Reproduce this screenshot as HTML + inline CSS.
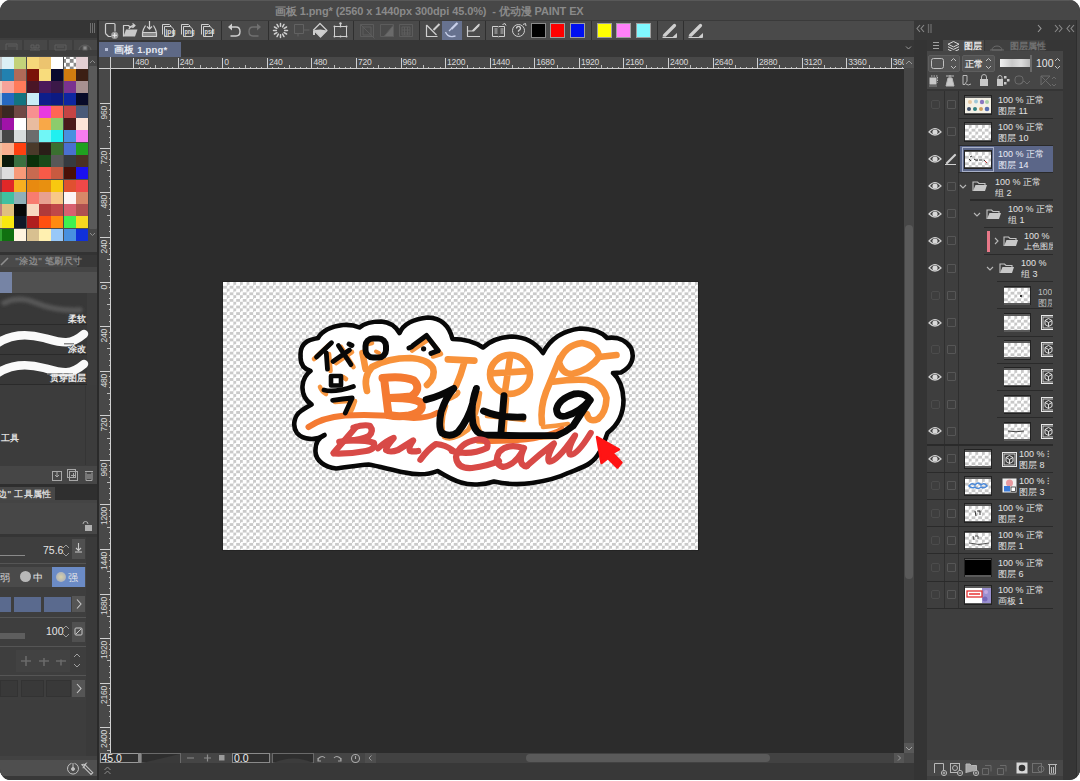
<!DOCTYPE html>
<html><head><meta charset="utf-8">
<style>
*{margin:0;padding:0;box-sizing:border-box}
html,body{width:1080px;height:781px;background:#fff;overflow:hidden;font-family:"Liberation Sans",sans-serif}
.a{position:absolute}
#win{position:absolute;left:0;top:0;width:1080px;height:780px;border-radius:11px;overflow:hidden;background:#3a3a3a}
#title{left:0;top:0;width:1080px;height:20px;background:#474747;border-top:1px solid #585858}
#title span{position:absolute;left:275px;top:3px;font-size:11px;font-weight:bold;color:#8a8a8a;white-space:nowrap;letter-spacing:-0.1px}
.rl{font-size:8.5px;color:#d8d8d8;line-height:9px;white-space:nowrap;letter-spacing:-0.2px}
.rv{font-size:8.5px;color:#d8d8d8;line-height:9px;white-space:nowrap;letter-spacing:-0.2px;transform-origin:0 0;transform:rotate(-90deg) translate(-100%,0)}
svg{position:absolute;overflow:visible}
.ic{stroke:#c9c9c9;fill:none;stroke-width:1.3}
.t{position:absolute;white-space:nowrap;color:#dedede;font-size:10px;line-height:11px}
</style></head>
<body>
<div id="win">
  <div id="title" class="a"><span>画板 1.png* (2560 x 1440px 300dpi 45.0%)&nbsp; - 优动漫 PAINT EX</span></div>
  <!-- left panel -->
  <div class="a" style="left:0;top:20px;width:98px;height:760px;background:#3c3c3c"></div>
  
  <!-- left header -->
<div class="a" style="left:0;top:20px;width:97px;height:18px;background:#353535"></div>
<div class="a" style="left:90px;top:23px;width:1px;height:10px;background:#6e6e6e"></div>
<div class="a" style="left:92px;top:23px;width:1px;height:10px;background:#6e6e6e"></div>
<div class="a" style="left:94px;top:23px;width:1px;height:10px;background:#6e6e6e"></div>
<div class="a" style="left:0;top:38px;width:97px;height:18px;background:#3e3e3e"></div>
<div class="a" style="left:0;top:40px;width:22px;height:10px;background:#474747"></div>
<div class="a" style="left:24px;top:40px;width:23px;height:10px;background:#474747"></div>
<div class="a" style="left:49px;top:40px;width:23px;height:10px;background:#474747"></div>
<div class="a" style="left:74px;top:40px;width:23px;height:10px;background:#474747"></div>
<svg style="left:0;top:38px" width="97" height="14" stroke="#5e5e5e" fill="none" stroke-width="1">
 <path d="M6 12V6h11v6M8 8h8" /><path d="M31 7h3v3h-3zM36 7h3v3h-3zM35 9v3M30 12h10" /><path d="M55 7h11v5H55zM57 9h7"/><path d="M79 12a6 5 0 0 1 12 0"/><rect x="83" y="8" width="4" height="4" fill="#8a8a8a"/>
</svg>
<!-- palette bg -->
<div class="a" style="left:0;top:56px;width:88px;height:185px;background:#4c4c4c"></div>
<div class="a" style="left:-10.3px;top:56.5px;width:12.0px;height:12.0px;background:#c8c8c8"></div>
<div class="a" style="left:2.0px;top:56.5px;width:12.0px;height:12.0px;background:#dcf0f5"></div>
<div class="a" style="left:14.3px;top:56.5px;width:12.0px;height:12.0px;background:#c3d27a"></div>
<div class="a" style="left:26.6px;top:56.5px;width:12.0px;height:12.0px;background:#f6d77a"></div>
<div class="a" style="left:38.9px;top:56.5px;width:12.0px;height:12.0px;background:#ecc46f"></div>
<div class="a" style="left:51.2px;top:56.5px;width:12.0px;height:12.0px;background:#ffffff"></div>
<div class="a" style="left:63.5px;top:56.5px;width:12.0px;height:12.0px;background:conic-gradient(#8a8a8a 25%,#fff 0 50%,#8a8a8a 0 75%,#fff 0);background-size:7.6px 7.6px;background-position:-1.8px -1.8px"></div>
<div class="a" style="left:75.8px;top:56.5px;width:12.0px;height:12.0px;background:#e3cfd3"></div>
<div class="a" style="left:-10.3px;top:68.8px;width:12.0px;height:12.0px;background:#3a6a8a"></div>
<div class="a" style="left:2.0px;top:68.8px;width:12.0px;height:12.0px;background:#2281b0"></div>
<div class="a" style="left:14.3px;top:68.8px;width:12.0px;height:12.0px;background:#b06a58"></div>
<div class="a" style="left:26.6px;top:68.8px;width:12.0px;height:12.0px;background:#7a1209"></div>
<div class="a" style="left:38.9px;top:68.8px;width:12.0px;height:12.0px;background:#f8dc7c"></div>
<div class="a" style="left:51.2px;top:68.8px;width:12.0px;height:12.0px;background:#0a0a2e"></div>
<div class="a" style="left:63.5px;top:68.8px;width:12.0px;height:12.0px;background:#d07c10"></div>
<div class="a" style="left:75.8px;top:68.8px;width:12.0px;height:12.0px;background:#3c1f14"></div>
<div class="a" style="left:-10.3px;top:81.1px;width:12.0px;height:12.0px;background:#f0d0c0"></div>
<div class="a" style="left:2.0px;top:81.1px;width:12.0px;height:12.0px;background:#f7a39a"></div>
<div class="a" style="left:14.3px;top:81.1px;width:12.0px;height:12.0px;background:#ff7b5a"></div>
<div class="a" style="left:26.6px;top:81.1px;width:12.0px;height:12.0px;background:#4a1626"></div>
<div class="a" style="left:38.9px;top:81.1px;width:12.0px;height:12.0px;background:#4a1a5a"></div>
<div class="a" style="left:51.2px;top:81.1px;width:12.0px;height:12.0px;background:#3b1848"></div>
<div class="a" style="left:63.5px;top:81.1px;width:12.0px;height:12.0px;background:#7a3290"></div>
<div class="a" style="left:75.8px;top:81.1px;width:12.0px;height:12.0px;background:#a89090"></div>
<div class="a" style="left:-10.3px;top:93.4px;width:12.0px;height:12.0px;background:#a0c0e0"></div>
<div class="a" style="left:2.0px;top:93.4px;width:12.0px;height:12.0px;background:#2668c0"></div>
<div class="a" style="left:14.3px;top:93.4px;width:12.0px;height:12.0px;background:#137480"></div>
<div class="a" style="left:26.6px;top:93.4px;width:12.0px;height:12.0px;background:#c8ecf6"></div>
<div class="a" style="left:38.9px;top:93.4px;width:12.0px;height:12.0px;background:#0d1e8a"></div>
<div class="a" style="left:51.2px;top:93.4px;width:12.0px;height:12.0px;background:#0c1a82"></div>
<div class="a" style="left:63.5px;top:93.4px;width:12.0px;height:12.0px;background:#0e26a0"></div>
<div class="a" style="left:75.8px;top:93.4px;width:12.0px;height:12.0px;background:#080a28"></div>
<div class="a" style="left:-10.3px;top:105.7px;width:12.0px;height:12.0px;background:#5a3020"></div>
<div class="a" style="left:2.0px;top:105.7px;width:12.0px;height:12.0px;background:#3a2822"></div>
<div class="a" style="left:14.3px;top:105.7px;width:12.0px;height:12.0px;background:#704844"></div>
<div class="a" style="left:26.6px;top:105.7px;width:12.0px;height:12.0px;background:#f79090"></div>
<div class="a" style="left:38.9px;top:105.7px;width:12.0px;height:12.0px;background:#e83ae0"></div>
<div class="a" style="left:51.2px;top:105.7px;width:12.0px;height:12.0px;background:#ff6654"></div>
<div class="a" style="left:63.5px;top:105.7px;width:12.0px;height:12.0px;background:#c44444"></div>
<div class="a" style="left:75.8px;top:105.7px;width:12.0px;height:12.0px;background:#4a5a78"></div>
<div class="a" style="left:-10.3px;top:118.0px;width:12.0px;height:12.0px;background:#602070"></div>
<div class="a" style="left:2.0px;top:118.0px;width:12.0px;height:12.0px;background:#a012a8"></div>
<div class="a" style="left:14.3px;top:118.0px;width:12.0px;height:12.0px;background:#ffffff"></div>
<div class="a" style="left:26.6px;top:118.0px;width:12.0px;height:12.0px;background:#e8bca0"></div>
<div class="a" style="left:38.9px;top:118.0px;width:12.0px;height:12.0px;background:#f8a848"></div>
<div class="a" style="left:51.2px;top:118.0px;width:12.0px;height:12.0px;background:#8ccc6c"></div>
<div class="a" style="left:63.5px;top:118.0px;width:12.0px;height:12.0px;background:#4a1a1a"></div>
<div class="a" style="left:75.8px;top:118.0px;width:12.0px;height:12.0px;background:#fce4d8"></div>
<div class="a" style="left:-10.3px;top:130.3px;width:12.0px;height:12.0px;background:#b0b0b0"></div>
<div class="a" style="left:2.0px;top:130.3px;width:12.0px;height:12.0px;background:#454545"></div>
<div class="a" style="left:14.3px;top:130.3px;width:12.0px;height:12.0px;background:#d8dcdc"></div>
<div class="a" style="left:26.6px;top:130.3px;width:12.0px;height:12.0px;background:#6c6c6c"></div>
<div class="a" style="left:38.9px;top:130.3px;width:12.0px;height:12.0px;background:#70f6f6"></div>
<div class="a" style="left:51.2px;top:130.3px;width:12.0px;height:12.0px;background:#20f0f0"></div>
<div class="a" style="left:63.5px;top:130.3px;width:12.0px;height:12.0px;background:#4890e0"></div>
<div class="a" style="left:75.8px;top:130.3px;width:12.0px;height:12.0px;background:#f87cf0"></div>
<div class="a" style="left:-10.3px;top:142.6px;width:12.0px;height:12.0px;background:#f0c0a0"></div>
<div class="a" style="left:2.0px;top:142.6px;width:12.0px;height:12.0px;background:#f8b090"></div>
<div class="a" style="left:14.3px;top:142.6px;width:12.0px;height:12.0px;background:#ff4010"></div>
<div class="a" style="left:26.6px;top:142.6px;width:12.0px;height:12.0px;background:#4a3a2a"></div>
<div class="a" style="left:38.9px;top:142.6px;width:12.0px;height:12.0px;background:#2a1e18"></div>
<div class="a" style="left:51.2px;top:142.6px;width:12.0px;height:12.0px;background:#3a7030"></div>
<div class="a" style="left:63.5px;top:142.6px;width:12.0px;height:12.0px;background:#4a70d0"></div>
<div class="a" style="left:75.8px;top:142.6px;width:12.0px;height:12.0px;background:#20a020"></div>
<div class="a" style="left:-10.3px;top:154.9px;width:12.0px;height:12.0px;background:#f0c890"></div>
<div class="a" style="left:2.0px;top:154.9px;width:12.0px;height:12.0px;background:#0a1a0a"></div>
<div class="a" style="left:14.3px;top:154.9px;width:12.0px;height:12.0px;background:#3a7040"></div>
<div class="a" style="left:26.6px;top:154.9px;width:12.0px;height:12.0px;background:#0a300a"></div>
<div class="a" style="left:38.9px;top:154.9px;width:12.0px;height:12.0px;background:#1a4a1a"></div>
<div class="a" style="left:51.2px;top:154.9px;width:12.0px;height:12.0px;background:#585858"></div>
<div class="a" style="left:63.5px;top:154.9px;width:12.0px;height:12.0px;background:#363a40"></div>
<div class="a" style="left:75.8px;top:154.9px;width:12.0px;height:12.0px;background:#4a3024"></div>
<div class="a" style="left:-10.3px;top:167.2px;width:12.0px;height:12.0px;background:#b0b0b0"></div>
<div class="a" style="left:2.0px;top:167.2px;width:12.0px;height:12.0px;background:#dcdcdc"></div>
<div class="a" style="left:14.3px;top:167.2px;width:12.0px;height:12.0px;background:#f89a78"></div>
<div class="a" style="left:26.6px;top:167.2px;width:12.0px;height:12.0px;background:#c86a50"></div>
<div class="a" style="left:38.9px;top:167.2px;width:12.0px;height:12.0px;background:#f85a48"></div>
<div class="a" style="left:51.2px;top:167.2px;width:12.0px;height:12.0px;background:#c85a40"></div>
<div class="a" style="left:63.5px;top:167.2px;width:12.0px;height:12.0px;background:#4a1008"></div>
<div class="a" style="left:75.8px;top:167.2px;width:12.0px;height:12.0px;background:#1a10f0"></div>
<div class="a" style="left:-10.3px;top:179.5px;width:12.0px;height:12.0px;background:#803040"></div>
<div class="a" style="left:2.0px;top:179.5px;width:12.0px;height:12.0px;background:#e02828"></div>
<div class="a" style="left:14.3px;top:179.5px;width:12.0px;height:12.0px;background:#f8b020"></div>
<div class="a" style="left:26.6px;top:179.5px;width:12.0px;height:12.0px;background:#e88a10"></div>
<div class="a" style="left:38.9px;top:179.5px;width:12.0px;height:12.0px;background:#e89010"></div>
<div class="a" style="left:51.2px;top:179.5px;width:12.0px;height:12.0px;background:#f8c810"></div>
<div class="a" style="left:63.5px;top:179.5px;width:12.0px;height:12.0px;background:#e05030"></div>
<div class="a" style="left:75.8px;top:179.5px;width:12.0px;height:12.0px;background:#f04848"></div>
<div class="a" style="left:-10.3px;top:191.8px;width:12.0px;height:12.0px;background:#50a080"></div>
<div class="a" style="left:2.0px;top:191.8px;width:12.0px;height:12.0px;background:#40c0a0"></div>
<div class="a" style="left:14.3px;top:191.8px;width:12.0px;height:12.0px;background:#90b0b8"></div>
<div class="a" style="left:26.6px;top:191.8px;width:12.0px;height:12.0px;background:#f87c70"></div>
<div class="a" style="left:38.9px;top:191.8px;width:12.0px;height:12.0px;background:#e8a090"></div>
<div class="a" style="left:51.2px;top:191.8px;width:12.0px;height:12.0px;background:#f8c888"></div>
<div class="a" style="left:63.5px;top:191.8px;width:12.0px;height:12.0px;background:#fcf4f4"></div>
<div class="a" style="left:75.8px;top:191.8px;width:12.0px;height:12.0px;background:#d88868"></div>
<div class="a" style="left:-10.3px;top:204.1px;width:12.0px;height:12.0px;background:#c08080"></div>
<div class="a" style="left:2.0px;top:204.1px;width:12.0px;height:12.0px;background:#e0c080"></div>
<div class="a" style="left:14.3px;top:204.1px;width:12.0px;height:12.0px;background:#080808"></div>
<div class="a" style="left:26.6px;top:204.1px;width:12.0px;height:12.0px;background:#f8d8c0"></div>
<div class="a" style="left:38.9px;top:204.1px;width:12.0px;height:12.0px;background:#b03a3a"></div>
<div class="a" style="left:51.2px;top:204.1px;width:12.0px;height:12.0px;background:#c04848"></div>
<div class="a" style="left:63.5px;top:204.1px;width:12.0px;height:12.0px;background:#d86070"></div>
<div class="a" style="left:75.8px;top:204.1px;width:12.0px;height:12.0px;background:#b05050"></div>
<div class="a" style="left:-10.3px;top:216.4px;width:12.0px;height:12.0px;background:#f0e060"></div>
<div class="a" style="left:2.0px;top:216.4px;width:12.0px;height:12.0px;background:#f8e810"></div>
<div class="a" style="left:14.3px;top:216.4px;width:12.0px;height:12.0px;background:#101828"></div>
<div class="a" style="left:26.6px;top:216.4px;width:12.0px;height:12.0px;background:#b01e1e"></div>
<div class="a" style="left:38.9px;top:216.4px;width:12.0px;height:12.0px;background:#ff5010"></div>
<div class="a" style="left:51.2px;top:216.4px;width:12.0px;height:12.0px;background:#ff8a10"></div>
<div class="a" style="left:63.5px;top:216.4px;width:12.0px;height:12.0px;background:#40f050"></div>
<div class="a" style="left:75.8px;top:216.4px;width:12.0px;height:12.0px;background:#f8d820"></div>
<div class="a" style="left:-10.3px;top:228.7px;width:12.0px;height:12.0px;background:#30a030"></div>
<div class="a" style="left:2.0px;top:228.7px;width:12.0px;height:12.0px;background:#107010"></div>
<div class="a" style="left:14.3px;top:228.7px;width:12.0px;height:12.0px;background:#fff4e0"></div>
<div class="a" style="left:26.6px;top:228.7px;width:12.0px;height:12.0px;background:#d8c090"></div>
<div class="a" style="left:38.9px;top:228.7px;width:12.0px;height:12.0px;background:#fff0b0"></div>
<div class="a" style="left:51.2px;top:228.7px;width:12.0px;height:12.0px;background:#98c8f8"></div>
<div class="a" style="left:63.5px;top:228.7px;width:12.0px;height:12.0px;background:#4890e0"></div>
<div class="a" style="left:75.8px;top:228.7px;width:12.0px;height:12.0px;background:#1030d8"></div>
<!-- palette scrollbar -->
<div class="a" style="left:88px;top:56px;width:9px;height:185px;background:#474747"></div>
<div class="a" style="left:88.5px;top:66px;width:8px;height:163px;background:#5a5a5a;border-radius:1px"></div>
<svg style="left:88px;top:56px" width="9" height="185" fill="none" stroke="#8c8c8c" stroke-width="1"><path d="M2 7l2.5-2.5L7 7"/><path d="M2 177l2.5 2.5L7 177"/></svg>
<div class="a" style="left:0;top:241px;width:97px;height:11px;background:#474747"></div>
<div class="a" style="left:0;top:252px;width:97px;height:3px;background:#333"></div>
<!-- brush size tab -->
<div class="a" style="left:0;top:255px;width:97px;height:12px;background:#383838"></div>
<div class="a" style="left:0;top:255px;width:77px;height:12px;background:#4a4a4a"></div>
<svg style="left:0;top:255px" width="12" height="12" fill="none" stroke="#8e8e8e" stroke-width="1.6"><path d="M1 10L8 3"/></svg>
<div class="t" style="left:15px;top:256px;font-size:8.5px;color:#8a8a8a;font-weight:bold;letter-spacing:0.3px">"涂边" 笔刷尺寸</div>
<div class="a" style="left:0;top:267px;width:97px;height:5px;background:#444"></div>
<div class="a" style="left:0;top:272px;width:97px;height:21px;background:#505050"></div>
<div class="a" style="left:0;top:272px;width:12px;height:21px;background:#7684a5"></div>
<!-- brush list -->
<div class="a" style="left:0;top:293px;width:87px;height:92px;background:#383838"></div>
<div class="a" style="left:87px;top:293px;width:10px;height:92px;background:#3d3d3d"></div>
<div class="a" style="left:0;top:324px;width:87px;height:1px;background:#2a2a2a"></div>
<div class="a" style="left:0;top:354px;width:87px;height:1px;background:#2a2a2a"></div>
<div class="a" style="left:0;top:384px;width:87px;height:1px;background:#2a2a2a"></div>
<svg style="left:0;top:293px" width="87" height="92">
 <defs><filter id="bl" x="-20%" y="-50%" width="140%" height="200%"><feGaussianBlur stdDeviation="1.6"/></filter></defs><path d="M4 10 C 14 5, 24 5, 36 10 S 60 18, 80 17" stroke="#565656" stroke-width="5.5" fill="none" stroke-linecap="round" filter="url(#bl)"/>
 <path d="M-2 50 C 10 42, 26 40, 44 45 S 70 53, 84 41" stroke="#fafafa" stroke-width="8.5" fill="none" stroke-linecap="round"/>
 <path d="M-2 80 C 10 72, 26 70, 44 75 S 70 83, 84 71" stroke="#fafafa" stroke-width="8.5" fill="none" stroke-linecap="round"/>
 <rect x="64" y="50" width="10" height="1.5" fill="#8a8a8a"/>
 <rect x="47" y="80" width="26" height="1.5" fill="#8a8a8a"/>
</svg>
<div class="t" style="left:68px;top:313.5px;font-size:8.5px;color:#e8e8e8;font-weight:bold">柔软</div>
<div class="t" style="left:68px;top:343.5px;font-size:8.5px;color:#e8e8e8;font-weight:bold">涂改</div>
<div class="t" style="left:50px;top:372.5px;font-size:8.5px;color:#e8e8e8;font-weight:bold">贯穿图层</div>
<!-- sub tool region -->
<div class="a" style="left:0;top:385px;width:97px;height:81px;background:#3c3c3c"></div>
<div class="a" style="left:85px;top:386px;width:1px;height:79px;background:#353535"></div>
<div class="t" style="left:0.5px;top:432.5px;font-size:8.5px;color:#e0e0e0;font-weight:bold">工具</div>
<div class="a" style="left:0;top:466px;width:97px;height:18px;background:#464646"></div>
<svg style="left:0;top:466px" width="97" height="18" fill="none" stroke="#a8a8a8" stroke-width="1">
 <rect x="52.5" y="5.5" width="9" height="9"/><path d="M57 6v5M55 9l2 2 2-2"/>
 <rect x="69.5" y="5.5" width="8" height="9"/><rect x="67.5" y="3.5" width="8" height="8"/><path d="M73.5 7v5M71 9.5h5"/>
 <path d="M85 5.5h8M86 6.5v8h6v-8M88 8v5M90 8v5"/>
</svg>
<div class="a" style="left:0;top:484px;width:97px;height:3px;background:#2e2e2e"></div>
<!-- tool property tab -->
<div class="a" style="left:0;top:487px;width:97px;height:13px;background:#2f2f2f"></div>
<div class="a" style="left:0;top:487px;width:55px;height:13px;background:#474747"></div>
<div class="t" style="left:-2px;top:488.5px;font-size:8.5px;color:#d8d8d8;font-weight:bold;letter-spacing:0.3px">边" 工具属性</div>
<div class="a" style="left:0;top:500px;width:97px;height:3px;background:#444"></div>
<div class="a" style="left:0;top:503px;width:97px;height:31px;background:#474747"></div>
<svg style="left:80px;top:519px" width="14" height="14" fill="none" stroke="#b0b0b0" stroke-width="1"><path d="M3 5a2.5 2.5 0 0 1 5 0"/><rect x="5" y="6" width="7" height="6" fill="#b0b0b0" stroke="none"/></svg>
<div class="a" style="left:0;top:534px;width:97px;height:3px;background:#353535"></div>
<!-- property rows -->
<div class="a" style="left:0;top:537px;width:86px;height:242px;background:#3e3e3e"></div>
<div class="a" style="left:86px;top:537px;width:11px;height:242px;background:#3a3a3a"></div>
<div class="a" style="left:0;top:555px;width:25px;height:1px;background:#8a8a8a"></div>
<div class="t" style="left:43px;top:545px;font-size:10.5px;color:#e4e4e4">75.6</div>
<svg style="left:62px;top:543px" width="8" height="16" fill="none" stroke="#9a9a9a" stroke-width="1"><path d="M1 5l3-3 3 3M1 10l3 3 3-3"/></svg>
<div class="a" style="left:72px;top:539px;width:13px;height:20px;background:#505050"></div>
<svg style="left:72px;top:539px" width="13" height="20" fill="none" stroke="#c8c8c8" stroke-width="1.1"><path d="M6.5 4v7M4 9l2.5 2.5L9 9M3 13h7"/></svg>
<div class="a" style="left:0;top:563px;width:86px;height:1px;background:#555"></div>
<!-- segmented -->
<div class="a" style="left:0;top:567px;width:86px;height:20px;background:#4a4a4a"></div>
<div class="a" style="left:52px;top:567px;width:33px;height:20px;background:#6b8bc6"></div>
<div class="t" style="left:0;top:572px;font-size:9.5px;color:#d8d8d8">弱</div>
<div class="a" style="left:20px;top:571px;width:11px;height:11px;border-radius:50%;background:#b8b8b8"></div>
<div class="t" style="left:33px;top:572px;font-size:9.5px;color:#e8e8e8">中</div>
<div class="a" style="left:56px;top:572px;width:10px;height:10px;border-radius:50%;background:radial-gradient(#d8d0a8,#a0a8c0)"></div>
<div class="t" style="left:68px;top:572px;font-size:9.5px;color:#e8e8e8">强</div>
<!-- blue boxes -->
<div class="a" style="left:0;top:597px;width:11px;height:15px;background:#5a6a8e"></div>
<div class="a" style="left:14px;top:597px;width:27px;height:15px;background:#5a6a8e"></div>
<div class="a" style="left:44px;top:597px;width:27px;height:15px;background:#5a6a8e"></div>
<div class="a" style="left:72px;top:596px;width:13px;height:16px;background:#555"></div>
<svg style="left:72px;top:596px" width="13" height="16" fill="none" stroke="#c8c8c8" stroke-width="1.1"><path d="M5 3.5l4 4.5-4 4.5"/></svg>
<div class="a" style="left:0;top:617px;width:86px;height:1px;background:#555"></div>
<div class="a" style="left:0;top:633px;width:25px;height:6px;background:#5e5e5e"></div>
<div class="t" style="left:46px;top:626px;font-size:10.5px;color:#e4e4e4">100</div>
<svg style="left:62px;top:624px" width="8" height="16" fill="none" stroke="#9a9a9a" stroke-width="1"><path d="M1 5l3-3 3 3M1 10l3 3 3-3"/></svg>
<div class="a" style="left:72px;top:622px;width:13px;height:20px;background:#505050"></div>
<svg style="left:72px;top:622px" width="13" height="20" fill="none" stroke="#c8c8c8" stroke-width="1"><rect x="3" y="6" width="7" height="7" rx="1"/><path d="M4 12l5-5"/></svg>
<div class="a" style="left:0;top:646px;width:86px;height:1px;background:#555"></div>
<div class="a" style="left:16px;top:650px;width:54px;height:22px;background:#424242"></div>
<svg style="left:18px;top:650px" width="68" height="22" fill="none" stroke="#6a6a6a" stroke-width="1.6"><path d="M3 11h10M8 6v10M21 11h10M26 8v8M38 11h10M43 9.5v6"/><path d="M56 7l3-3 3 3M56 14l3 3 3-3" stroke="#a0a0a0" stroke-width="1"/></svg>
<div class="a" style="left:0;top:675px;width:86px;height:1px;background:#555"></div>
<div class="a" style="left:0;top:680px;width:18px;height:17px;background:#393939;border:1px solid #333"></div>
<div class="a" style="left:21px;top:680px;width:23px;height:17px;background:#393939;border:1px solid #333"></div>
<div class="a" style="left:46px;top:680px;width:25px;height:17px;background:#393939;border:1px solid #333"></div>
<div class="a" style="left:72px;top:680px;width:13px;height:17px;background:#555"></div>
<svg style="left:72px;top:680px" width="13" height="17" fill="none" stroke="#c8c8c8" stroke-width="1.1"><path d="M5 4l4 4.5-4 4.5"/></svg>
<div class="a" style="left:0;top:700px;width:86px;height:56px;background:#3d3d3d"></div>
<!-- bottom bar -->
<div class="a" style="left:0;top:756px;width:97px;height:4px;background:#424242"></div>
<div class="a" style="left:0;top:760px;width:97px;height:16px;background:#4f4f4f"></div>
<div class="a" style="left:0;top:776px;width:97px;height:4px;background:#383838"></div>
<svg style="left:64px;top:760px" width="34" height="16" fill="none" stroke="#c0c0c0" stroke-width="1"><path d="M10.5 3.3A5.5 5.5 0 1 1 7.5 3.3"/><path d="M9 3v6"/><circle cx="9" cy="9" r="1.5" fill="#c0c0c0"/><path d="M22 3.5a3.2 3.2 0 0 0 -1.5 4.5l6.5 6.5 1.8-1.8-6.5-6.5a3.2 3.2 0 0 0 -4.5 -1.5l2 2-1 1.5z" stroke-width="1.1"/></svg>

  <!-- separator -->
  <div class="a" style="left:97px;top:20px;width:2px;height:760px;background:#2a2a2a"></div>
  <!-- toolbar -->
  <div class="a" style="left:99px;top:20px;width:815px;height:20px;background:#4a4a4a"></div>
  <div class="a" style="left:99px;top:20px;width:815px;height:1px;background:#3a3a3a"></div>
<div class="a" style="left:442px;top:21px;width:20px;height:19px;background:#67728f"></div>
<div class="a" style="left:531px;top:23px;width:15px;height:15px;background:#000;border:1px solid #8a8a8a"></div>
<div class="a" style="left:550px;top:23px;width:15px;height:15px;background:#f00;border:1px solid #a0a0a0"></div>
<div class="a" style="left:570px;top:23px;width:15px;height:15px;background:#0010f0;border:1px solid #a0a0a0"></div>
<div class="a" style="left:597px;top:23px;width:15px;height:15px;background:#ff0;border:1px solid #a0a0a0"></div>
<div class="a" style="left:616px;top:23px;width:15px;height:15px;background:#ff80f8;border:1px solid #a0a0a0"></div>
<div class="a" style="left:636px;top:23px;width:15px;height:15px;background:#80f8ff;border:1px solid #a0a0a0"></div>
<svg style="left:0;top:0" width="1080" height="42" fill="none" stroke="#cfcfcf" stroke-width="1.2" stroke-linejoin="round">
 <g stroke="#2f2f2f" stroke-width="1"><path d="M221.5 21v19M268.5 21v19M353.5 21v19M419.5 21v19M485.5 21v19M591.5 21v19M657.5 21v19M683.5 21v19"/></g>
 <!-- new -->
 <path d="M105.5 33.5V24.5q0-1 1-1h7.5q1 0 1 1v7M105.5 33.5l3 3h3"/>
 <circle cx="114.7" cy="35.3" r="3.6" fill="#9a9a9a" stroke="none"/><path d="M114.7 33v4.6M112.4 35.3h4.6" stroke="#eee" stroke-width="1"/>
 <!-- open -->
 <path d="M123.5 36.5V25.5h5l1.5 1.5h3"/><path d="M123.5 36.5l2.5-7h11.5l-2.5 7z" fill="#c8c8c8" stroke="none"/><path d="M129 29q1-3 5-3.5M132.5 23.5l2.5 2-2.5 2.2" stroke-width="1.3"/>
 <!-- import -->
 <path d="M149.5 21v8M147 26.5l2.5 2.5 2.5-2.5"/><path d="M145.5 25.5q-2 3-3 7M153.5 25.5q2 3 3 7"/><rect x="142.5" y="32.5" width="14" height="4" stroke="#cfcfcf" fill="#8c8c8c"/>
 <!-- jpg png psd -->
 <g stroke-width="1"><path d="M162.5 34.5V24.5h7l2 2"/><path d="M164.5 36.5V26.5h6.5l2.5 2.5v7.5z"/>
 <path d="M181.5 34.5V24.5h7l2 2"/><path d="M183.5 36.5V26.5h6.5l2.5 2.5v7.5z"/>
 <path d="M201.5 34.5V24.5h7l2 2"/><path d="M203.5 36.5V26.5h6.5l2.5 2.5v7.5z"/></g>
 <text x="165.5" y="33.5" font-size="7" fill="#dcdcdc" stroke="none" font-weight="bold" font-family="Liberation Sans" textLength="10" lengthAdjust="spacingAndGlyphs">jpg</text>
 <text x="184.5" y="33.5" font-size="7" fill="#dcdcdc" stroke="none" font-weight="bold" font-family="Liberation Sans" textLength="10" lengthAdjust="spacingAndGlyphs">png</text>
 <text x="204.5" y="33.5" font-size="7" fill="#dcdcdc" stroke="none" font-weight="bold" font-family="Liberation Sans" textLength="10" lengthAdjust="spacingAndGlyphs">psd</text>
 <!-- undo redo -->
 <path d="M231 27h5q4 0 4 4.5t-4 4.5h-5.5" stroke-width="1.4"/><path d="M228 27l4-3.5v7z" fill="#d0d0d0" stroke="none"/>
 <path d="M258 27h-5q-4 0-4 4.5t4 4.5h5.5" stroke="#707070" stroke-width="1.4"/><path d="M261 27l-4-3.5v7z" fill="#707070" stroke="none"/>
 <!-- spinner -->
 <g stroke="#d0d0d0" stroke-width="1.5" stroke-linecap="round"><path d="M284.70 30.50L287.50 30.50M284.14 32.60L286.56 34.00M282.60 34.14L284.00 36.56M280.50 34.70L280.50 37.50M278.40 34.14L277.00 36.56M276.86 32.60L274.44 34.00M276.30 30.50L273.50 30.50M276.86 28.40L274.44 27.00M278.40 26.86L277.00 24.44M280.50 26.30L280.50 23.50M282.60 26.86L284.00 24.44M284.14 28.40L286.56 27.00"/></g>
 <!-- dim square -->
 <g stroke="#626262" stroke-width="1"><rect x="294.5" y="24.5" width="9" height="9"/><path d="M303.5 30h6M298 33.5v3"/></g>
 <!-- bucket -->
 <path d="M320 23.5l7 7-6.5 6.5-7-7z"/><path d="M313.8 30l6.7-0.5 6.5 1-6.5 6.5z" fill="#cfcfcf" stroke="none"/><rect x="313" y="31" width="2" height="4" fill="#cfcfcf" stroke="none"/>
 <!-- transform -->
 <rect x="334.5" y="26.5" width="12" height="10" stroke-width="1"/><path d="M340.5 23v3.5" stroke-width="1"/>
 <g fill="#cfcfcf" stroke="none"><circle cx="340.5" cy="23.5" r="1.2"/><circle cx="334.5" cy="26.5" r="1"/><circle cx="346.5" cy="26.5" r="1"/><circle cx="334.5" cy="36.5" r="1"/><circle cx="346.5" cy="36.5" r="1"/><circle cx="340.5" cy="36.5" r="1"/><circle cx="340.5" cy="26.5" r="1"/></g>
 <!-- dim icons -->
 <g stroke="#5c5c5c" stroke-width="1"><rect x="360.5" y="24.5" width="13" height="12"/><path d="M360.5 24.5l14 14M363 27h8v8h-8z"/>
 <rect x="380.5" y="24.5" width="13" height="12"/><path d="M393.5 25v11.5H384z" fill="#6a6a6a"/>
 <rect x="399.5" y="24.5" width="13" height="12"/><path d="M402 27h8v8h-8zM404.5 27v8M407.5 27v8M402 30h8M402 33h8"/></g>
 <!-- rulers -->
 <path d="M426.5 25v11.5h11"/><path d="M426.5 25l10 10"/><path d="M433.5 30l6-6" stroke-width="2"/>
 <path d="M445.5 32q2 5 7 4.5l3-0.5M449 31l8-8" stroke="#c8d0ea" stroke-width="1.3"/><path d="M451.5 29l6-6" stroke="#c8d0ea" stroke-width="2"/>
 <path d="M467.5 26v10.5h12.5M467.5 31h5l7-7" /><path d="M473 31l6-6" stroke-width="2"/>
 <!-- book -->
 <path d="M492.5 26.5h5.5l0.5 0.7 0.5-0.7h5.5v10h-5.5l-0.5 0.7-0.5-0.7h-5.5z" stroke-width="1"/><path d="M494.5 29h3M494.5 31h3M494.5 33h3M500.5 29h3M500.5 31h3M500.5 33h3" stroke-width="0.9"/><path d="M502.5 24.5l2.5-1 1 2" stroke-width="1"/>
 <!-- help -->
 <circle cx="518.5" cy="30.5" r="6" stroke-width="1"/><path d="M516.5 28.5q0-2.2 2-2.2t2 2.2q0 1.2-2 2.3v1" stroke-width="1.3"/><circle cx="518.5" cy="34" r="0.8" fill="#cfcfcf" stroke="none"/><path d="M523 24.5l2.5-1 0.5 2.5" stroke-width="1"/>
 <!-- pencils -->
 <g><path d="M665 35l9.5-9.5" stroke-width="3.2" stroke-linecap="round"/><path d="M662.5 37.5h14" stroke-width="1"/><path d="M672 37.5l5-4.5v4.5z" fill="#cfcfcf" stroke="none"/><path d="M663 36.5l1.5-2.5" stroke-width="1.3"/>
 <path d="M691 35l9.5-9.5" stroke-width="3.2" stroke-linecap="round"/><path d="M688.5 37.5h14" stroke-width="1"/><path d="M698 37.5l5-4.5v4.5z" fill="#cfcfcf" stroke="none"/><path d="M689 36.5l1.5-2.5" stroke-width="1.3"/></g>
</svg>

  <!-- tab row -->
  <div class="a" style="left:99px;top:40px;width:815px;height:17px;background:#363636"></div>
  <div class="a" style="left:99px;top:41.5px;width:82px;height:15.5px;background:#5e6986"></div>
  <!-- rulers -->
  <div class="a" style="left:99px;top:57px;width:805px;height:12px;background:#484848"></div>
  <div class="a" style="left:99px;top:57px;width:12px;height:696px;background:#484848"></div>
  <div class="a" style="left:99px;top:68px;width:805px;height:1px;background:#d0d0d0"></div>
  <div class="a" style="left:110px;top:57px;width:1px;height:696px;background:#d0d0d0"></div>
  <!-- canvas -->
  <div class="a" style="left:111px;top:69px;width:793px;height:684px;background:#2c2c2c"></div>
  <div class="a" style="left:133.2px;top:58px;width:1px;height:10px;background:#cfcfcf"></div>
<div class="a rl" style="left:135.2px;top:57.5px">480</div>
<div class="a" style="left:138.7px;top:66.5px;width:1px;height:1.5px;background:#bdbdbd"></div>
<div class="a" style="left:144.3px;top:66.5px;width:1px;height:1.5px;background:#bdbdbd"></div>
<div class="a" style="left:149.9px;top:66.5px;width:1px;height:1.5px;background:#bdbdbd"></div>
<div class="a" style="left:155.4px;top:65px;width:1px;height:3px;background:#bdbdbd"></div>
<div class="a" style="left:161.0px;top:66.5px;width:1px;height:1.5px;background:#bdbdbd"></div>
<div class="a" style="left:166.6px;top:66.5px;width:1px;height:1.5px;background:#bdbdbd"></div>
<div class="a" style="left:172.2px;top:66.5px;width:1px;height:1.5px;background:#bdbdbd"></div>
<div class="a" style="left:177.7px;top:58px;width:1px;height:10px;background:#cfcfcf"></div>
<div class="a rl" style="left:179.7px;top:57.5px">240</div>
<div class="a" style="left:183.3px;top:66.5px;width:1px;height:1.5px;background:#bdbdbd"></div>
<div class="a" style="left:188.9px;top:66.5px;width:1px;height:1.5px;background:#bdbdbd"></div>
<div class="a" style="left:194.4px;top:66.5px;width:1px;height:1.5px;background:#bdbdbd"></div>
<div class="a" style="left:200.0px;top:65px;width:1px;height:3px;background:#bdbdbd"></div>
<div class="a" style="left:205.6px;top:66.5px;width:1px;height:1.5px;background:#bdbdbd"></div>
<div class="a" style="left:211.2px;top:66.5px;width:1px;height:1.5px;background:#bdbdbd"></div>
<div class="a" style="left:216.7px;top:66.5px;width:1px;height:1.5px;background:#bdbdbd"></div>
<div class="a" style="left:222.3px;top:58px;width:1px;height:10px;background:#cfcfcf"></div>
<div class="a rl" style="left:224.3px;top:57.5px">0</div>
<div class="a" style="left:227.9px;top:66.5px;width:1px;height:1.5px;background:#bdbdbd"></div>
<div class="a" style="left:233.4px;top:66.5px;width:1px;height:1.5px;background:#bdbdbd"></div>
<div class="a" style="left:239.0px;top:66.5px;width:1px;height:1.5px;background:#bdbdbd"></div>
<div class="a" style="left:244.6px;top:65px;width:1px;height:3px;background:#bdbdbd"></div>
<div class="a" style="left:250.2px;top:66.5px;width:1px;height:1.5px;background:#bdbdbd"></div>
<div class="a" style="left:255.7px;top:66.5px;width:1px;height:1.5px;background:#bdbdbd"></div>
<div class="a" style="left:261.3px;top:66.5px;width:1px;height:1.5px;background:#bdbdbd"></div>
<div class="a" style="left:266.9px;top:58px;width:1px;height:10px;background:#cfcfcf"></div>
<div class="a rl" style="left:268.9px;top:57.5px">240</div>
<div class="a" style="left:272.4px;top:66.5px;width:1px;height:1.5px;background:#bdbdbd"></div>
<div class="a" style="left:278.0px;top:66.5px;width:1px;height:1.5px;background:#bdbdbd"></div>
<div class="a" style="left:283.6px;top:66.5px;width:1px;height:1.5px;background:#bdbdbd"></div>
<div class="a" style="left:289.2px;top:65px;width:1px;height:3px;background:#bdbdbd"></div>
<div class="a" style="left:294.7px;top:66.5px;width:1px;height:1.5px;background:#bdbdbd"></div>
<div class="a" style="left:300.3px;top:66.5px;width:1px;height:1.5px;background:#bdbdbd"></div>
<div class="a" style="left:305.9px;top:66.5px;width:1px;height:1.5px;background:#bdbdbd"></div>
<div class="a" style="left:311.4px;top:58px;width:1px;height:10px;background:#cfcfcf"></div>
<div class="a rl" style="left:313.4px;top:57.5px">480</div>
<div class="a" style="left:317.0px;top:66.5px;width:1px;height:1.5px;background:#bdbdbd"></div>
<div class="a" style="left:322.6px;top:66.5px;width:1px;height:1.5px;background:#bdbdbd"></div>
<div class="a" style="left:328.2px;top:66.5px;width:1px;height:1.5px;background:#bdbdbd"></div>
<div class="a" style="left:333.7px;top:65px;width:1px;height:3px;background:#bdbdbd"></div>
<div class="a" style="left:339.3px;top:66.5px;width:1px;height:1.5px;background:#bdbdbd"></div>
<div class="a" style="left:344.9px;top:66.5px;width:1px;height:1.5px;background:#bdbdbd"></div>
<div class="a" style="left:350.4px;top:66.5px;width:1px;height:1.5px;background:#bdbdbd"></div>
<div class="a" style="left:356.0px;top:58px;width:1px;height:10px;background:#cfcfcf"></div>
<div class="a rl" style="left:358.0px;top:57.5px">720</div>
<div class="a" style="left:361.6px;top:66.5px;width:1px;height:1.5px;background:#bdbdbd"></div>
<div class="a" style="left:367.2px;top:66.5px;width:1px;height:1.5px;background:#bdbdbd"></div>
<div class="a" style="left:372.7px;top:66.5px;width:1px;height:1.5px;background:#bdbdbd"></div>
<div class="a" style="left:378.3px;top:65px;width:1px;height:3px;background:#bdbdbd"></div>
<div class="a" style="left:383.9px;top:66.5px;width:1px;height:1.5px;background:#bdbdbd"></div>
<div class="a" style="left:389.4px;top:66.5px;width:1px;height:1.5px;background:#bdbdbd"></div>
<div class="a" style="left:395.0px;top:66.5px;width:1px;height:1.5px;background:#bdbdbd"></div>
<div class="a" style="left:400.6px;top:58px;width:1px;height:10px;background:#cfcfcf"></div>
<div class="a rl" style="left:402.6px;top:57.5px">960</div>
<div class="a" style="left:406.2px;top:66.5px;width:1px;height:1.5px;background:#bdbdbd"></div>
<div class="a" style="left:411.7px;top:66.5px;width:1px;height:1.5px;background:#bdbdbd"></div>
<div class="a" style="left:417.3px;top:66.5px;width:1px;height:1.5px;background:#bdbdbd"></div>
<div class="a" style="left:422.9px;top:65px;width:1px;height:3px;background:#bdbdbd"></div>
<div class="a" style="left:428.4px;top:66.5px;width:1px;height:1.5px;background:#bdbdbd"></div>
<div class="a" style="left:434.0px;top:66.5px;width:1px;height:1.5px;background:#bdbdbd"></div>
<div class="a" style="left:439.6px;top:66.5px;width:1px;height:1.5px;background:#bdbdbd"></div>
<div class="a" style="left:445.1px;top:58px;width:1px;height:10px;background:#cfcfcf"></div>
<div class="a rl" style="left:447.1px;top:57.5px">1200</div>
<div class="a" style="left:450.7px;top:66.5px;width:1px;height:1.5px;background:#bdbdbd"></div>
<div class="a" style="left:456.3px;top:66.5px;width:1px;height:1.5px;background:#bdbdbd"></div>
<div class="a" style="left:461.9px;top:66.5px;width:1px;height:1.5px;background:#bdbdbd"></div>
<div class="a" style="left:467.4px;top:65px;width:1px;height:3px;background:#bdbdbd"></div>
<div class="a" style="left:473.0px;top:66.5px;width:1px;height:1.5px;background:#bdbdbd"></div>
<div class="a" style="left:478.6px;top:66.5px;width:1px;height:1.5px;background:#bdbdbd"></div>
<div class="a" style="left:484.1px;top:66.5px;width:1px;height:1.5px;background:#bdbdbd"></div>
<div class="a" style="left:489.7px;top:58px;width:1px;height:10px;background:#cfcfcf"></div>
<div class="a rl" style="left:491.7px;top:57.5px">1440</div>
<div class="a" style="left:495.3px;top:66.5px;width:1px;height:1.5px;background:#bdbdbd"></div>
<div class="a" style="left:500.9px;top:66.5px;width:1px;height:1.5px;background:#bdbdbd"></div>
<div class="a" style="left:506.4px;top:66.5px;width:1px;height:1.5px;background:#bdbdbd"></div>
<div class="a" style="left:512.0px;top:65px;width:1px;height:3px;background:#bdbdbd"></div>
<div class="a" style="left:517.6px;top:66.5px;width:1px;height:1.5px;background:#bdbdbd"></div>
<div class="a" style="left:523.1px;top:66.5px;width:1px;height:1.5px;background:#bdbdbd"></div>
<div class="a" style="left:528.7px;top:66.5px;width:1px;height:1.5px;background:#bdbdbd"></div>
<div class="a" style="left:534.3px;top:58px;width:1px;height:10px;background:#cfcfcf"></div>
<div class="a rl" style="left:536.3px;top:57.5px">1680</div>
<div class="a" style="left:539.9px;top:66.5px;width:1px;height:1.5px;background:#bdbdbd"></div>
<div class="a" style="left:545.4px;top:66.5px;width:1px;height:1.5px;background:#bdbdbd"></div>
<div class="a" style="left:551.0px;top:66.5px;width:1px;height:1.5px;background:#bdbdbd"></div>
<div class="a" style="left:556.6px;top:65px;width:1px;height:3px;background:#bdbdbd"></div>
<div class="a" style="left:562.1px;top:66.5px;width:1px;height:1.5px;background:#bdbdbd"></div>
<div class="a" style="left:567.7px;top:66.5px;width:1px;height:1.5px;background:#bdbdbd"></div>
<div class="a" style="left:573.3px;top:66.5px;width:1px;height:1.5px;background:#bdbdbd"></div>
<div class="a" style="left:578.9px;top:58px;width:1px;height:10px;background:#cfcfcf"></div>
<div class="a rl" style="left:580.9px;top:57.5px">1920</div>
<div class="a" style="left:584.4px;top:66.5px;width:1px;height:1.5px;background:#bdbdbd"></div>
<div class="a" style="left:590.0px;top:66.5px;width:1px;height:1.5px;background:#bdbdbd"></div>
<div class="a" style="left:595.6px;top:66.5px;width:1px;height:1.5px;background:#bdbdbd"></div>
<div class="a" style="left:601.1px;top:65px;width:1px;height:3px;background:#bdbdbd"></div>
<div class="a" style="left:606.7px;top:66.5px;width:1px;height:1.5px;background:#bdbdbd"></div>
<div class="a" style="left:612.3px;top:66.5px;width:1px;height:1.5px;background:#bdbdbd"></div>
<div class="a" style="left:617.9px;top:66.5px;width:1px;height:1.5px;background:#bdbdbd"></div>
<div class="a" style="left:623.4px;top:58px;width:1px;height:10px;background:#cfcfcf"></div>
<div class="a rl" style="left:625.4px;top:57.5px">2160</div>
<div class="a" style="left:629.0px;top:66.5px;width:1px;height:1.5px;background:#bdbdbd"></div>
<div class="a" style="left:634.6px;top:66.5px;width:1px;height:1.5px;background:#bdbdbd"></div>
<div class="a" style="left:640.1px;top:66.5px;width:1px;height:1.5px;background:#bdbdbd"></div>
<div class="a" style="left:645.7px;top:65px;width:1px;height:3px;background:#bdbdbd"></div>
<div class="a" style="left:651.3px;top:66.5px;width:1px;height:1.5px;background:#bdbdbd"></div>
<div class="a" style="left:656.9px;top:66.5px;width:1px;height:1.5px;background:#bdbdbd"></div>
<div class="a" style="left:662.4px;top:66.5px;width:1px;height:1.5px;background:#bdbdbd"></div>
<div class="a" style="left:668.0px;top:58px;width:1px;height:10px;background:#cfcfcf"></div>
<div class="a rl" style="left:670.0px;top:57.5px">2400</div>
<div class="a" style="left:673.6px;top:66.5px;width:1px;height:1.5px;background:#bdbdbd"></div>
<div class="a" style="left:679.1px;top:66.5px;width:1px;height:1.5px;background:#bdbdbd"></div>
<div class="a" style="left:684.7px;top:66.5px;width:1px;height:1.5px;background:#bdbdbd"></div>
<div class="a" style="left:690.3px;top:65px;width:1px;height:3px;background:#bdbdbd"></div>
<div class="a" style="left:695.9px;top:66.5px;width:1px;height:1.5px;background:#bdbdbd"></div>
<div class="a" style="left:701.4px;top:66.5px;width:1px;height:1.5px;background:#bdbdbd"></div>
<div class="a" style="left:707.0px;top:66.5px;width:1px;height:1.5px;background:#bdbdbd"></div>
<div class="a" style="left:712.6px;top:58px;width:1px;height:10px;background:#cfcfcf"></div>
<div class="a rl" style="left:714.6px;top:57.5px">2640</div>
<div class="a" style="left:718.1px;top:66.5px;width:1px;height:1.5px;background:#bdbdbd"></div>
<div class="a" style="left:723.7px;top:66.5px;width:1px;height:1.5px;background:#bdbdbd"></div>
<div class="a" style="left:729.3px;top:66.5px;width:1px;height:1.5px;background:#bdbdbd"></div>
<div class="a" style="left:734.9px;top:65px;width:1px;height:3px;background:#bdbdbd"></div>
<div class="a" style="left:740.4px;top:66.5px;width:1px;height:1.5px;background:#bdbdbd"></div>
<div class="a" style="left:746.0px;top:66.5px;width:1px;height:1.5px;background:#bdbdbd"></div>
<div class="a" style="left:751.6px;top:66.5px;width:1px;height:1.5px;background:#bdbdbd"></div>
<div class="a" style="left:757.1px;top:58px;width:1px;height:10px;background:#cfcfcf"></div>
<div class="a rl" style="left:759.1px;top:57.5px">2880</div>
<div class="a" style="left:762.7px;top:66.5px;width:1px;height:1.5px;background:#bdbdbd"></div>
<div class="a" style="left:768.3px;top:66.5px;width:1px;height:1.5px;background:#bdbdbd"></div>
<div class="a" style="left:773.9px;top:66.5px;width:1px;height:1.5px;background:#bdbdbd"></div>
<div class="a" style="left:779.4px;top:65px;width:1px;height:3px;background:#bdbdbd"></div>
<div class="a" style="left:785.0px;top:66.5px;width:1px;height:1.5px;background:#bdbdbd"></div>
<div class="a" style="left:790.6px;top:66.5px;width:1px;height:1.5px;background:#bdbdbd"></div>
<div class="a" style="left:796.1px;top:66.5px;width:1px;height:1.5px;background:#bdbdbd"></div>
<div class="a" style="left:801.7px;top:58px;width:1px;height:10px;background:#cfcfcf"></div>
<div class="a rl" style="left:803.7px;top:57.5px">3120</div>
<div class="a" style="left:807.3px;top:66.5px;width:1px;height:1.5px;background:#bdbdbd"></div>
<div class="a" style="left:812.9px;top:66.5px;width:1px;height:1.5px;background:#bdbdbd"></div>
<div class="a" style="left:818.4px;top:66.5px;width:1px;height:1.5px;background:#bdbdbd"></div>
<div class="a" style="left:824.0px;top:65px;width:1px;height:3px;background:#bdbdbd"></div>
<div class="a" style="left:829.6px;top:66.5px;width:1px;height:1.5px;background:#bdbdbd"></div>
<div class="a" style="left:835.1px;top:66.5px;width:1px;height:1.5px;background:#bdbdbd"></div>
<div class="a" style="left:840.7px;top:66.5px;width:1px;height:1.5px;background:#bdbdbd"></div>
<div class="a" style="left:846.3px;top:58px;width:1px;height:10px;background:#cfcfcf"></div>
<div class="a rl" style="left:848.3px;top:57.5px">3360</div>
<div class="a" style="left:851.9px;top:66.5px;width:1px;height:1.5px;background:#bdbdbd"></div>
<div class="a" style="left:857.4px;top:66.5px;width:1px;height:1.5px;background:#bdbdbd"></div>
<div class="a" style="left:863.0px;top:66.5px;width:1px;height:1.5px;background:#bdbdbd"></div>
<div class="a" style="left:868.6px;top:65px;width:1px;height:3px;background:#bdbdbd"></div>
<div class="a" style="left:874.1px;top:66.5px;width:1px;height:1.5px;background:#bdbdbd"></div>
<div class="a" style="left:879.7px;top:66.5px;width:1px;height:1.5px;background:#bdbdbd"></div>
<div class="a" style="left:885.3px;top:66.5px;width:1px;height:1.5px;background:#bdbdbd"></div>
<div class="a" style="left:890.8px;top:58px;width:1px;height:10px;background:#cfcfcf"></div>
<div class="a rl" style="left:892.8px;top:57.5px">3600</div>
<div class="a" style="left:896.4px;top:66.5px;width:1px;height:1.5px;background:#bdbdbd"></div>
<div class="a" style="left:902.0px;top:66.5px;width:1px;height:1.5px;background:#bdbdbd"></div>
<div class="a" style="left:100px;top:103.2px;width:10px;height:1px;background:#cfcfcf"></div>
<div class="a rv" style="left:100px;top:106.2px">960</div>
<div class="a" style="left:108.5px;top:108.8px;width:1.5px;height:1px;background:#bdbdbd"></div>
<div class="a" style="left:108.5px;top:114.4px;width:1.5px;height:1px;background:#bdbdbd"></div>
<div class="a" style="left:108.5px;top:119.9px;width:1.5px;height:1px;background:#bdbdbd"></div>
<div class="a" style="left:107px;top:125.5px;width:3px;height:1px;background:#bdbdbd"></div>
<div class="a" style="left:108.5px;top:131.1px;width:1.5px;height:1px;background:#bdbdbd"></div>
<div class="a" style="left:108.5px;top:136.6px;width:1.5px;height:1px;background:#bdbdbd"></div>
<div class="a" style="left:108.5px;top:142.2px;width:1.5px;height:1px;background:#bdbdbd"></div>
<div class="a" style="left:100px;top:147.8px;width:10px;height:1px;background:#cfcfcf"></div>
<div class="a rv" style="left:100px;top:150.8px">720</div>
<div class="a" style="left:108.5px;top:153.4px;width:1.5px;height:1px;background:#bdbdbd"></div>
<div class="a" style="left:108.5px;top:158.9px;width:1.5px;height:1px;background:#bdbdbd"></div>
<div class="a" style="left:108.5px;top:164.5px;width:1.5px;height:1px;background:#bdbdbd"></div>
<div class="a" style="left:107px;top:170.1px;width:3px;height:1px;background:#bdbdbd"></div>
<div class="a" style="left:108.5px;top:175.6px;width:1.5px;height:1px;background:#bdbdbd"></div>
<div class="a" style="left:108.5px;top:181.2px;width:1.5px;height:1px;background:#bdbdbd"></div>
<div class="a" style="left:108.5px;top:186.8px;width:1.5px;height:1px;background:#bdbdbd"></div>
<div class="a" style="left:100px;top:192.4px;width:10px;height:1px;background:#cfcfcf"></div>
<div class="a rv" style="left:100px;top:195.4px">480</div>
<div class="a" style="left:108.5px;top:197.9px;width:1.5px;height:1px;background:#bdbdbd"></div>
<div class="a" style="left:108.5px;top:203.5px;width:1.5px;height:1px;background:#bdbdbd"></div>
<div class="a" style="left:108.5px;top:209.1px;width:1.5px;height:1px;background:#bdbdbd"></div>
<div class="a" style="left:107px;top:214.6px;width:3px;height:1px;background:#bdbdbd"></div>
<div class="a" style="left:108.5px;top:220.2px;width:1.5px;height:1px;background:#bdbdbd"></div>
<div class="a" style="left:108.5px;top:225.8px;width:1.5px;height:1px;background:#bdbdbd"></div>
<div class="a" style="left:108.5px;top:231.4px;width:1.5px;height:1px;background:#bdbdbd"></div>
<div class="a" style="left:100px;top:236.9px;width:10px;height:1px;background:#cfcfcf"></div>
<div class="a rv" style="left:100px;top:239.9px">240</div>
<div class="a" style="left:108.5px;top:242.5px;width:1.5px;height:1px;background:#bdbdbd"></div>
<div class="a" style="left:108.5px;top:248.1px;width:1.5px;height:1px;background:#bdbdbd"></div>
<div class="a" style="left:108.5px;top:253.6px;width:1.5px;height:1px;background:#bdbdbd"></div>
<div class="a" style="left:107px;top:259.2px;width:3px;height:1px;background:#bdbdbd"></div>
<div class="a" style="left:108.5px;top:264.8px;width:1.5px;height:1px;background:#bdbdbd"></div>
<div class="a" style="left:108.5px;top:270.4px;width:1.5px;height:1px;background:#bdbdbd"></div>
<div class="a" style="left:108.5px;top:275.9px;width:1.5px;height:1px;background:#bdbdbd"></div>
<div class="a" style="left:100px;top:281.5px;width:10px;height:1px;background:#cfcfcf"></div>
<div class="a rv" style="left:100px;top:284.5px">0</div>
<div class="a" style="left:108.5px;top:287.1px;width:1.5px;height:1px;background:#bdbdbd"></div>
<div class="a" style="left:108.5px;top:292.6px;width:1.5px;height:1px;background:#bdbdbd"></div>
<div class="a" style="left:108.5px;top:298.2px;width:1.5px;height:1px;background:#bdbdbd"></div>
<div class="a" style="left:107px;top:303.8px;width:3px;height:1px;background:#bdbdbd"></div>
<div class="a" style="left:108.5px;top:309.4px;width:1.5px;height:1px;background:#bdbdbd"></div>
<div class="a" style="left:108.5px;top:314.9px;width:1.5px;height:1px;background:#bdbdbd"></div>
<div class="a" style="left:108.5px;top:320.5px;width:1.5px;height:1px;background:#bdbdbd"></div>
<div class="a" style="left:100px;top:326.1px;width:10px;height:1px;background:#cfcfcf"></div>
<div class="a rv" style="left:100px;top:329.1px">240</div>
<div class="a" style="left:108.5px;top:331.6px;width:1.5px;height:1px;background:#bdbdbd"></div>
<div class="a" style="left:108.5px;top:337.2px;width:1.5px;height:1px;background:#bdbdbd"></div>
<div class="a" style="left:108.5px;top:342.8px;width:1.5px;height:1px;background:#bdbdbd"></div>
<div class="a" style="left:107px;top:348.4px;width:3px;height:1px;background:#bdbdbd"></div>
<div class="a" style="left:108.5px;top:353.9px;width:1.5px;height:1px;background:#bdbdbd"></div>
<div class="a" style="left:108.5px;top:359.5px;width:1.5px;height:1px;background:#bdbdbd"></div>
<div class="a" style="left:108.5px;top:365.1px;width:1.5px;height:1px;background:#bdbdbd"></div>
<div class="a" style="left:100px;top:370.6px;width:10px;height:1px;background:#cfcfcf"></div>
<div class="a rv" style="left:100px;top:373.6px">480</div>
<div class="a" style="left:108.5px;top:376.2px;width:1.5px;height:1px;background:#bdbdbd"></div>
<div class="a" style="left:108.5px;top:381.8px;width:1.5px;height:1px;background:#bdbdbd"></div>
<div class="a" style="left:108.5px;top:387.4px;width:1.5px;height:1px;background:#bdbdbd"></div>
<div class="a" style="left:107px;top:392.9px;width:3px;height:1px;background:#bdbdbd"></div>
<div class="a" style="left:108.5px;top:398.5px;width:1.5px;height:1px;background:#bdbdbd"></div>
<div class="a" style="left:108.5px;top:404.1px;width:1.5px;height:1px;background:#bdbdbd"></div>
<div class="a" style="left:108.5px;top:409.6px;width:1.5px;height:1px;background:#bdbdbd"></div>
<div class="a" style="left:100px;top:415.2px;width:10px;height:1px;background:#cfcfcf"></div>
<div class="a rv" style="left:100px;top:418.2px">720</div>
<div class="a" style="left:108.5px;top:420.8px;width:1.5px;height:1px;background:#bdbdbd"></div>
<div class="a" style="left:108.5px;top:426.4px;width:1.5px;height:1px;background:#bdbdbd"></div>
<div class="a" style="left:108.5px;top:431.9px;width:1.5px;height:1px;background:#bdbdbd"></div>
<div class="a" style="left:107px;top:437.5px;width:3px;height:1px;background:#bdbdbd"></div>
<div class="a" style="left:108.5px;top:443.1px;width:1.5px;height:1px;background:#bdbdbd"></div>
<div class="a" style="left:108.5px;top:448.6px;width:1.5px;height:1px;background:#bdbdbd"></div>
<div class="a" style="left:108.5px;top:454.2px;width:1.5px;height:1px;background:#bdbdbd"></div>
<div class="a" style="left:100px;top:459.8px;width:10px;height:1px;background:#cfcfcf"></div>
<div class="a rv" style="left:100px;top:462.8px">960</div>
<div class="a" style="left:108.5px;top:465.4px;width:1.5px;height:1px;background:#bdbdbd"></div>
<div class="a" style="left:108.5px;top:470.9px;width:1.5px;height:1px;background:#bdbdbd"></div>
<div class="a" style="left:108.5px;top:476.5px;width:1.5px;height:1px;background:#bdbdbd"></div>
<div class="a" style="left:107px;top:482.1px;width:3px;height:1px;background:#bdbdbd"></div>
<div class="a" style="left:108.5px;top:487.6px;width:1.5px;height:1px;background:#bdbdbd"></div>
<div class="a" style="left:108.5px;top:493.2px;width:1.5px;height:1px;background:#bdbdbd"></div>
<div class="a" style="left:108.5px;top:498.8px;width:1.5px;height:1px;background:#bdbdbd"></div>
<div class="a" style="left:100px;top:504.4px;width:10px;height:1px;background:#cfcfcf"></div>
<div class="a rv" style="left:100px;top:507.4px">1200</div>
<div class="a" style="left:108.5px;top:509.9px;width:1.5px;height:1px;background:#bdbdbd"></div>
<div class="a" style="left:108.5px;top:515.5px;width:1.5px;height:1px;background:#bdbdbd"></div>
<div class="a" style="left:108.5px;top:521.1px;width:1.5px;height:1px;background:#bdbdbd"></div>
<div class="a" style="left:107px;top:526.6px;width:3px;height:1px;background:#bdbdbd"></div>
<div class="a" style="left:108.5px;top:532.2px;width:1.5px;height:1px;background:#bdbdbd"></div>
<div class="a" style="left:108.5px;top:537.8px;width:1.5px;height:1px;background:#bdbdbd"></div>
<div class="a" style="left:108.5px;top:543.3px;width:1.5px;height:1px;background:#bdbdbd"></div>
<div class="a" style="left:100px;top:548.9px;width:10px;height:1px;background:#cfcfcf"></div>
<div class="a rv" style="left:100px;top:551.9px">1440</div>
<div class="a" style="left:108.5px;top:554.5px;width:1.5px;height:1px;background:#bdbdbd"></div>
<div class="a" style="left:108.5px;top:560.1px;width:1.5px;height:1px;background:#bdbdbd"></div>
<div class="a" style="left:108.5px;top:565.6px;width:1.5px;height:1px;background:#bdbdbd"></div>
<div class="a" style="left:107px;top:571.2px;width:3px;height:1px;background:#bdbdbd"></div>
<div class="a" style="left:108.5px;top:576.8px;width:1.5px;height:1px;background:#bdbdbd"></div>
<div class="a" style="left:108.5px;top:582.3px;width:1.5px;height:1px;background:#bdbdbd"></div>
<div class="a" style="left:108.5px;top:587.9px;width:1.5px;height:1px;background:#bdbdbd"></div>
<div class="a" style="left:100px;top:593.5px;width:10px;height:1px;background:#cfcfcf"></div>
<div class="a rv" style="left:100px;top:596.5px">1680</div>
<div class="a" style="left:108.5px;top:599.1px;width:1.5px;height:1px;background:#bdbdbd"></div>
<div class="a" style="left:108.5px;top:604.6px;width:1.5px;height:1px;background:#bdbdbd"></div>
<div class="a" style="left:108.5px;top:610.2px;width:1.5px;height:1px;background:#bdbdbd"></div>
<div class="a" style="left:107px;top:615.8px;width:3px;height:1px;background:#bdbdbd"></div>
<div class="a" style="left:108.5px;top:621.3px;width:1.5px;height:1px;background:#bdbdbd"></div>
<div class="a" style="left:108.5px;top:626.9px;width:1.5px;height:1px;background:#bdbdbd"></div>
<div class="a" style="left:108.5px;top:632.5px;width:1.5px;height:1px;background:#bdbdbd"></div>
<div class="a" style="left:100px;top:638.1px;width:10px;height:1px;background:#cfcfcf"></div>
<div class="a rv" style="left:100px;top:641.1px">1920</div>
<div class="a" style="left:108.5px;top:643.6px;width:1.5px;height:1px;background:#bdbdbd"></div>
<div class="a" style="left:108.5px;top:649.2px;width:1.5px;height:1px;background:#bdbdbd"></div>
<div class="a" style="left:108.5px;top:654.8px;width:1.5px;height:1px;background:#bdbdbd"></div>
<div class="a" style="left:107px;top:660.3px;width:3px;height:1px;background:#bdbdbd"></div>
<div class="a" style="left:108.5px;top:665.9px;width:1.5px;height:1px;background:#bdbdbd"></div>
<div class="a" style="left:108.5px;top:671.5px;width:1.5px;height:1px;background:#bdbdbd"></div>
<div class="a" style="left:108.5px;top:677.1px;width:1.5px;height:1px;background:#bdbdbd"></div>
<div class="a" style="left:100px;top:682.6px;width:10px;height:1px;background:#cfcfcf"></div>
<div class="a rv" style="left:100px;top:685.6px">2160</div>
<div class="a" style="left:108.5px;top:688.2px;width:1.5px;height:1px;background:#bdbdbd"></div>
<div class="a" style="left:108.5px;top:693.8px;width:1.5px;height:1px;background:#bdbdbd"></div>
<div class="a" style="left:108.5px;top:699.3px;width:1.5px;height:1px;background:#bdbdbd"></div>
<div class="a" style="left:107px;top:704.9px;width:3px;height:1px;background:#bdbdbd"></div>
<div class="a" style="left:108.5px;top:710.5px;width:1.5px;height:1px;background:#bdbdbd"></div>
<div class="a" style="left:108.5px;top:716.1px;width:1.5px;height:1px;background:#bdbdbd"></div>
<div class="a" style="left:108.5px;top:721.6px;width:1.5px;height:1px;background:#bdbdbd"></div>
<div class="a" style="left:100px;top:727.2px;width:10px;height:1px;background:#cfcfcf"></div>
<div class="a rv" style="left:100px;top:730.2px">2400</div>
<div class="a" style="left:108.5px;top:732.8px;width:1.5px;height:1px;background:#bdbdbd"></div>
<div class="a" style="left:108.5px;top:738.3px;width:1.5px;height:1px;background:#bdbdbd"></div>
<div class="a" style="left:108.5px;top:743.9px;width:1.5px;height:1px;background:#bdbdbd"></div>
<div class="a" style="left:107px;top:749.5px;width:3px;height:1px;background:#bdbdbd"></div>
  <!-- vscroll -->
  <div class="a" style="left:904px;top:57px;width:10px;height:696px;background:#3e3e3e"></div>
  <!-- tab label -->
<div class="a" style="left:104.5px;top:47.5px;width:3.5px;height:3.5px;background:#b8c0d8"></div>
<div class="t" style="left:114px;top:43.5px;font-size:9.5px;color:#e6e9f2;font-weight:bold;letter-spacing:0.2px">画板 1.png*</div>
<svg style="left:903px;top:44px" width="10" height="8" fill="none"><path d="M3 2.5l2.5 2.5L8 2.5" stroke="#9a9a9a" stroke-width="1"/></svg>
<!-- vertical scroll -->
<div class="a" style="left:904px;top:57px;width:9.5px;height:11px;background:#505050"></div>
<svg style="left:904px;top:57px" width="10" height="11" fill="none"><path d="M2 7l3-3 3 3" stroke="#9a9a9a" stroke-width="1"/></svg>
<div class="a" style="left:904px;top:68px;width:9.5px;height:675px;background:#464646"></div>
<div class="a" style="left:904.5px;top:225px;width:8.5px;height:354px;background:#5a5a5a;border-radius:4px"></div>
<div class="a" style="left:904px;top:743px;width:9.5px;height:9.5px;background:#585858"></div>
<svg style="left:904px;top:743px" width="10" height="10" fill="none"><path d="M2 4l3 3 3-3" stroke="#a0a0a0" stroke-width="1"/></svg>
<!-- status row -->
<div class="a" style="left:99px;top:752.5px;width:805px;height:10.5px;background:#454545"></div>
<div class="a" style="left:904px;top:752.5px;width:9.5px;height:10.5px;background:#4a4a4a"></div>
<div class="a" style="left:100px;top:752.8px;width:39px;height:10.3px;background:#2f2f2f;border:1px solid #9a9a9a"></div>
<div class="t" style="left:101.5px;top:752.5px;font-size:10.5px;line-height:11px;color:#f0f0f0">45.0</div>
<div class="a" style="left:138px;top:752.8px;width:3px;height:10.3px;background:#8a8a8a"></div>
<svg style="left:141px;top:752.8px" width="40" height="10.5"><rect x="0.5" y="0.5" width="39" height="9.5" fill="#2e2e2e" stroke="#6a6a6a"/><path d="M1 10L39 1v9z" fill="#3a3a3a"/></svg>
<svg style="left:180px;top:752px" width="60" height="12" fill="none" stroke="#8c8c8c" stroke-width="1.2"><path d="M7 6h7M24 6h7M27.5 2.5v7"/><rect x="39" y="3" width="5.5" height="5.5" fill="#9a9a9a" stroke="none"/></svg>
<div class="a" style="left:232px;top:752.8px;width:38px;height:10.3px;background:#2f2f2f;border:1px solid #8a8a8a"></div>
<div class="t" style="left:234px;top:752.5px;font-size:10.5px;line-height:11px;color:#f0f0f0">0.0</div>
<svg style="left:272px;top:752.8px" width="42" height="10.5"><rect x="0.5" y="0.5" width="41" height="9.5" fill="#2e2e2e" stroke="#6a6a6a"/><path d="M1 10Q22 1 41 10z" fill="#3c3c3c"/></svg>
<svg style="left:314px;top:752px" width="64" height="12" fill="none" stroke="#a8a8a8" stroke-width="1.1"><path d="M4 9a4 4 0 0 1 7 -3M4 6v3h3"/><path d="M27 9a4 4 0 0 0 -7 -3M27 6v3h-3"/><circle cx="41.5" cy="6.5" r="4"/><path d="M41.5 4v3"/><path d="M56 3.5l-2.5 2.5 2.5 2.5" stroke="#888"/></svg>
<div class="a" style="left:365px;top:752.8px;width:11px;height:10.3px;background:#4e4e4e"></div>
<svg style="left:365px;top:752px" width="11" height="12" fill="none"><path d="M6.5 3.5L4 6l2.5 2.5" stroke="#9a9a9a" stroke-width="1"/></svg>
<div class="a" style="left:376px;top:752.8px;width:518px;height:10.3px;background:#424242"></div>
<div class="a" style="left:525.5px;top:753.5px;width:244px;height:8.5px;background:#5a5a5a;border-radius:4.5px"></div>
<div class="a" style="left:894px;top:752.8px;width:10px;height:10.3px;background:#555"></div>
<svg style="left:894px;top:752px" width="10" height="12" fill="none"><path d="M4 3.5l2.5 2.5L4 8.5" stroke="#a0a0a0" stroke-width="1"/></svg>
<!-- bottom -->
<div class="a" style="left:99px;top:763px;width:815px;height:17px;background:#383838"></div>
<svg style="left:99px;top:763px" width="20" height="16" fill="none" stroke="#8a8a8a" stroke-width="1"><path d="M5.5 7l3-3 3 3M5.5 11l3-3 3 3"/></svg>

  <!-- right strip -->
  <div class="a" style="left:914px;top:40px;width:13px;height:740px;background:#343434"></div>
  <!-- layer panel -->
  <div class="a" style="left:927px;top:51px;width:136px;height:729px;background:#3f3f3f"></div>
  <div class="a" style="left:1063px;top:40px;width:17px;height:740px;background:#363636"></div>
  <div class="a" style="left:914px;top:20px;width:166px;height:20px;background:#373737"></div>
<svg style="left:0;top:0" width="1080" height="60" fill="none" stroke="#9a9a9a" stroke-width="1.1"><path d="M920 25l-3 3.5 3 3.5M924 25l-3 3.5 3 3.5" stroke="#8a8a8a"/><path d="M928.5 24v9M931 24v9" stroke="#6a6a6a" stroke-width="1.3"/><path d="M1038 25l3 3.5-3 3.5"/><path d="M1055 25l3 3.5-3 3.5M1059 25l3 3.5-3 3.5" stroke="#8a8a8a"/><path d="M1070 25l-3 3.5 3 3.5M1074 25l-3 3.5 3 3.5" stroke="#8a8a8a"/></svg>
<div class="a" style="left:927px;top:40px;width:136px;height:11px;background:#363636"></div>
<svg style="left:0;top:0" width="1080" height="60" fill="none" stroke="#a0a0a0" stroke-width="1"><path d="M933 42.5h6M933 45.5h6M933 48.5h6"/></svg>
<div class="a" style="left:943px;top:40px;width:41px;height:11px;background:#4a4a4a"></div>
<div class="a" style="left:985px;top:40px;width:60px;height:11px;background:#404040"></div>
<svg style="left:0;top:0" width="1080" height="60" fill="none" stroke="#d8d8d8" stroke-width="1"><path d="M953.5 41.5l5.5 2.7-5.5 2.7-5.5-2.7z"/><path d="M948 46.7l5.5 2.7 5.5-2.7M948 49.4l5.5 2.7 5.5-2.7" /></svg>
<div class="t" style="left:964px;top:40.5px;font-size:8.5px;color:#e8e8e8;font-weight:bold">图层</div>
<svg style="left:0;top:0" width="1080" height="60" fill="none" stroke="#6a6a6a" stroke-width="1"><path d="M992 50a5 4 0 0 1 10 0zM990 50h14"/></svg>
<div class="t" style="left:1010px;top:40.5px;font-size:8.5px;color:#707070;font-weight:bold">图层属性</div>
<div class="a" style="left:927px;top:51px;width:136px;height:39px;background:#464646"></div>
<div class="a" style="left:928px;top:55px;width:32px;height:17px;background:#535353;border:1px solid #5e5e5e;border-radius:2px"></div>
<div class="a" style="left:962px;top:55px;width:33px;height:17px;background:#535353;border:1px solid #5e5e5e;border-radius:2px"></div>
<svg style="left:0;top:0" width="1080" height="100" fill="none" stroke="#c0c0c0" stroke-width="1"><rect x="931.5" y="58.5" width="12" height="10" rx="2"/><path d="M951 61l2.5-2.5 2.5 2.5M951 66l2.5 2.5 2.5-2.5M986 61l2.5-2.5 2.5 2.5M986 66l2.5 2.5 2.5-2.5M1055 61l2.5-2.5 2.5 2.5M1055 66l2.5 2.5 2.5-2.5"/></svg>
<div class="t" style="left:965px;top:58.5px;font-size:9px;color:#e0e0e0;font-weight:bold">正常</div>
<div class="a" style="left:1000px;top:59px;width:30px;height:8px;background:linear-gradient(90deg,#f0f0f0,#c8c8c8 40%,#dcdcdc 70%,#b8b8b8)"></div>
<div class="a" style="left:1030px;top:55px;width:2px;height:17px;background:#6a6a6a"></div>
<div class="t" style="left:1036px;top:58px;font-size:10.5px;color:#e8e8e8">100</div>
<svg style="left:0;top:0" width="1080" height="100" fill="none" stroke="#b8b8b8" stroke-width="1"><rect x="929.5" y="77.5" width="7" height="7" fill="#c8c8c8" stroke="none"/><path d="M931 76h6.5v6.5" stroke-dasharray="1.5 1"/><path d="M929 86h8" stroke="#8a8a8a"/><path d="M946 76h8M950 75v3M948 78l-2 8h8l-2-8z" fill="#c8c8c8"/><path d="M963 75.5h4v6q-2 1-2 3h-2zM966 84q2 2 5 0" stroke-width="1"/><path d="M981.5 79v-2a2.5 2.5 0 0 1 5 0v2"/><rect x="980" y="79" width="8" height="7" fill="#c8c8c8" stroke="none"/><path d="M998 79v-1.5a2 2 0 0 1 4 0V79"/><rect x="997" y="79" width="6" height="7" fill="#c8c8c8" stroke="none"/><rect x="1004" y="76" width="2.5" height="2.5" fill="#c8c8c8" stroke="none"/><rect x="1007" y="79" width="2.5" height="2.5" fill="#c8c8c8" stroke="none"/><rect x="1004" y="82" width="2.5" height="2.5" fill="#c8c8c8" stroke="none"/><g stroke="#6a6a6a"><rect x="1015" y="76" width="8" height="8" rx="3"/><path d="M1020 84l4-3 3 3 3-3"/><path d="M1041 76l10 10M1041 76h9l-9 9z"/><path d="M1052 79l2-2 2 2M1052 84l2 2 2-2"/></g></svg>
<div class="a" style="left:927px;top:89px;width:136px;height:2px;background:#353535"></div>
<div class="a" style="left:927px;top:91px;width:136px;height:669px;background:#3e3e3e"></div>
<div class="a" style="left:943.5px;top:91px;width:1px;height:517px;background:#2f2f2f"></div>
<div class="a" style="left:958px;top:91px;width:1px;height:517px;background:#2f2f2f"></div>
<div class="a" style="left:930.5px;top:100.2px;width:9px;height:9px;border:1px solid #4c4c4c;border-radius:2px"></div>
<div class="a" style="left:947px;top:100.2px;width:9px;height:9px;border:1px solid #565656;border-radius:1px"></div>
<div class="a" style="left:964.2px;top:95.1px;width:27.5px;height:19.5px;background:#222"></div><div class="a" style="left:964.9000000000001px;top:96.1px;width:26px;height:1.8px;background:#5a5a5a"></div><div class="a" style="left:964.9000000000001px;top:112.3px;width:26px;height:1.8px;background:#5a5a5a"></div><div class="a" style="left:964.9000000000001px;top:97.7px;width:26px;height:14.8px;background:#fff;background-image:conic-gradient(#c8c8c8 25%,transparent 0 50%,#c8c8c8 0 75%,transparent 0);background-size:6.6px 6.6px"></div>
<svg style="left:965px;top:97.7px" width="26" height="15"><rect width="26" height="15" fill="#f4f1e6"/><circle cx="5" cy="4" r="2" fill="#e8c8a0"/><circle cx="11" cy="3.5" r="2" fill="#a0c8d8"/><circle cx="17" cy="4" r="2.2" fill="#8a78c0"/><circle cx="22" cy="4" r="2" fill="#a8d0a8"/><circle cx="4" cy="11" r="2" fill="#40506a"/><circle cx="10" cy="11" r="2" fill="#308080"/><circle cx="16" cy="11" r="2" fill="#d0a060"/><circle cx="22" cy="11" r="2.3" fill="#5870b0"/></svg>
<div class="t" style="left:998px;top:94.9px;font-size:9px;line-height:10px;color:#e2e2e2;width:55px;overflow:hidden;">100 % 正常</div><div class="t" style="left:998px;top:105.9px;font-size:9px;line-height:10px;color:#e2e2e2;width:55px;overflow:hidden;">图层 11</div>
<div class="a" style="left:958px;top:117.7px;width:95px;height:1.2px;background:#2a2a2a"></div>
<svg style="left:928px;top:126.9px" width="14" height="10" fill="none"><path d="M1 5q6-7 12 0q-6 6-12 0z" fill="#3e3e3e" stroke="#d0d0d0" stroke-width="1.2"/><circle cx="7" cy="5" r="2.6" fill="#d8d8d8"/></svg>
<div class="a" style="left:947px;top:127.4px;width:9px;height:9px;border:1px solid #565656;border-radius:1px"></div>
<div class="a" style="left:964.2px;top:122.3px;width:27.5px;height:19.5px;background:#222"></div><div class="a" style="left:964.9000000000001px;top:123.3px;width:26px;height:1.8px;background:#5a5a5a"></div><div class="a" style="left:964.9000000000001px;top:139.5px;width:26px;height:1.8px;background:#5a5a5a"></div><div class="a" style="left:964.9000000000001px;top:124.9px;width:26px;height:14.8px;background:#fff;background-image:conic-gradient(#c8c8c8 25%,transparent 0 50%,#c8c8c8 0 75%,transparent 0);background-size:6.6px 6.6px"></div>
<div class="t" style="left:998px;top:122.1px;font-size:9px;line-height:10px;color:#e2e2e2;width:55px;overflow:hidden;">100 % 正常</div><div class="t" style="left:998px;top:133.1px;font-size:9px;line-height:10px;color:#e2e2e2;width:55px;overflow:hidden;">图层 10</div>
<div class="a" style="left:958px;top:144.9px;width:95px;height:1.2px;background:#2a2a2a"></div>
<div class="a" style="left:959.5px;top:146.0px;width:93.5px;height:26.72px;background:#5b6688"></div>
<div class="a" style="left:961.5px;top:146.5px;width:32.5px;height:25px;border:1px solid #a8b0c8"></div>
<svg style="left:928px;top:154.1px" width="14" height="10" fill="none"><path d="M1 5q6-7 12 0q-6 6-12 0z" fill="#3e3e3e" stroke="#d0d0d0" stroke-width="1.2"/><circle cx="7" cy="5" r="2.6" fill="#d8d8d8"/></svg>
<svg style="left:944px;top:152.1px" width="14" height="14" fill="none" stroke="#d0d0d0"><path d="M3 11l8-8" stroke-width="2.2" stroke-linecap="round"/><path d="M1 12.5h11" stroke-width="1"/></svg>
<div class="a" style="left:964.2px;top:149.5px;width:27.5px;height:19.5px;background:#222"></div><div class="a" style="left:964.9000000000001px;top:150.5px;width:26px;height:1.8px;background:#5a5a5a"></div><div class="a" style="left:964.9000000000001px;top:166.7px;width:26px;height:1.8px;background:#5a5a5a"></div><div class="a" style="left:964.9000000000001px;top:152.1px;width:26px;height:14.8px;background:#fff;background-image:conic-gradient(#c8c8c8 25%,transparent 0 50%,#c8c8c8 0 75%,transparent 0);background-size:6.6px 6.6px"></div>
<svg style="left:965px;top:152.1px" width="26" height="15"><path d="M5 5l2-1M4 7l2 2M9 7q2 2 4 1M14 8l3 0M19 8l2 2" stroke="#333" stroke-width="1" fill="none"/><path d="M20 9l2 2" stroke="#c03030" stroke-width="1"/></svg>
<div class="t" style="left:998px;top:149.3px;font-size:9px;line-height:10px;color:#e9ecf6;width:55px;overflow:hidden;">100 % 正常</div><div class="t" style="left:998px;top:160.3px;font-size:9px;line-height:10px;color:#e9ecf6;width:55px;overflow:hidden;">图层 14</div>
<div class="a" style="left:958px;top:172.2px;width:95px;height:1.2px;background:#2a2a2a"></div>
<svg style="left:928px;top:181.4px" width="14" height="10" fill="none"><path d="M1 5q6-7 12 0q-6 6-12 0z" fill="#3e3e3e" stroke="#d0d0d0" stroke-width="1.2"/><circle cx="7" cy="5" r="2.6" fill="#d8d8d8"/></svg>
<div class="a" style="left:947px;top:181.9px;width:9px;height:9px;border:1px solid #565656;border-radius:1px"></div>
<svg style="left:959px;top:184.4px" width="8" height="6" fill="none"><path d="M1 1l3 3 3-3" stroke="#b8b8b8" stroke-width="1.1"/></svg>
<svg style="left:972px;top:180.4px" width="16" height="12" fill="none"><path d="M1 11V2h4.5l1.5 1.5h6V5" stroke="#c4c4c4" stroke-width="1.1"/><path d="M1 11l2.5-6h11.5L13 11z" fill="#c8c8c8"/></svg>
<div class="t" style="left:995px;top:176.6px;font-size:9px;line-height:10px;color:#e2e2e2;width:58px;overflow:hidden;">100 % 正常</div><div class="t" style="left:995px;top:187.6px;font-size:9px;line-height:10px;color:#e2e2e2;width:58px;overflow:hidden;">组 2</div>
<div class="a" style="left:970px;top:199.4px;width:83px;height:1.2px;background:#2a2a2a"></div>
<svg style="left:928px;top:208.6px" width="14" height="10" fill="none"><path d="M1 5q6-7 12 0q-6 6-12 0z" fill="#3e3e3e" stroke="#d0d0d0" stroke-width="1.2"/><circle cx="7" cy="5" r="2.6" fill="#d8d8d8"/></svg>
<div class="a" style="left:947px;top:209.1px;width:9px;height:9px;border:1px solid #565656;border-radius:1px"></div>
<svg style="left:973px;top:211.6px" width="8" height="6" fill="none"><path d="M1 1l3 3 3-3" stroke="#b8b8b8" stroke-width="1.1"/></svg>
<svg style="left:985.5px;top:207.6px" width="16" height="12" fill="none"><path d="M1 11V2h4.5l1.5 1.5h6V5" stroke="#c4c4c4" stroke-width="1.1"/><path d="M1 11l2.5-6h11.5L13 11z" fill="#c8c8c8"/></svg>
<div class="t" style="left:1008px;top:203.8px;font-size:9px;line-height:10px;color:#e2e2e2;width:45px;overflow:hidden;">100 % 正常</div><div class="t" style="left:1008px;top:214.8px;font-size:9px;line-height:10px;color:#e2e2e2;width:45px;overflow:hidden;">组 1</div>
<div class="a" style="left:984px;top:226.6px;width:69px;height:1.2px;background:#2a2a2a"></div>
<svg style="left:928px;top:235.8px" width="14" height="10" fill="none"><path d="M1 5q6-7 12 0q-6 6-12 0z" fill="#3e3e3e" stroke="#d0d0d0" stroke-width="1.2"/><circle cx="7" cy="5" r="2.6" fill="#d8d8d8"/></svg>
<div class="a" style="left:947px;top:236.3px;width:9px;height:9px;border:1px solid #565656;border-radius:1px"></div>
<div class="a" style="left:987px;top:230.7px;width:3px;height:21px;background:#e87888"></div>
<svg style="left:994px;top:236.8px" width="6" height="8" fill="none"><path d="M1 1l3 3-3 3" stroke="#b8b8b8" stroke-width="1.1"/></svg>
<svg style="left:1002.5px;top:234.8px" width="16" height="12" fill="none"><path d="M1 11V2h4.5l1.5 1.5h6V5" stroke="#c4c4c4" stroke-width="1.1"/><path d="M1 11l2.5-6h11.5L13 11z" fill="#c8c8c8"/></svg>
<div class="t" style="left:1024px;top:231.0px;font-size:9px;line-height:10px;color:#e2e2e2;width:29px;overflow:hidden;">100 %</div><div class="t" style="left:1024px;top:242.0px;font-size:8px;line-height:10px;color:#e2e2e2;width:29px;overflow:hidden;">上色图层</div>
<div class="a" style="left:984px;top:253.8px;width:69px;height:1.2px;background:#2a2a2a"></div>
<svg style="left:928px;top:263.0px" width="14" height="10" fill="none"><path d="M1 5q6-7 12 0q-6 6-12 0z" fill="#3e3e3e" stroke="#d0d0d0" stroke-width="1.2"/><circle cx="7" cy="5" r="2.6" fill="#d8d8d8"/></svg>
<div class="a" style="left:947px;top:263.5px;width:9px;height:9px;border:1px solid #565656;border-radius:1px"></div>
<svg style="left:986px;top:266.0px" width="8" height="6" fill="none"><path d="M1 1l3 3 3-3" stroke="#b8b8b8" stroke-width="1.1"/></svg>
<svg style="left:999px;top:262.0px" width="16" height="12" fill="none"><path d="M1 11V2h4.5l1.5 1.5h6V5" stroke="#c4c4c4" stroke-width="1.1"/><path d="M1 11l2.5-6h11.5L13 11z" fill="#c8c8c8"/></svg>
<div class="t" style="left:1021px;top:258.2px;font-size:9px;line-height:10px;color:#e2e2e2;width:32px;overflow:hidden;">100 %</div><div class="t" style="left:1021px;top:269.2px;font-size:9px;line-height:10px;color:#e2e2e2;width:32px;overflow:hidden;">组 3</div>
<div class="a" style="left:997px;top:281.0px;width:56px;height:1.2px;background:#2a2a2a"></div>
<div class="a" style="left:930.5px;top:290.8px;width:9px;height:9px;border:1px solid #4c4c4c;border-radius:2px"></div>
<div class="a" style="left:947px;top:290.8px;width:9px;height:9px;border:1px solid #565656;border-radius:1px"></div>
<div class="a" style="left:1003.5px;top:285.6px;width:27.5px;height:19.5px;background:#222"></div><div class="a" style="left:1004.2px;top:286.6px;width:26px;height:1.8px;background:#5a5a5a"></div><div class="a" style="left:1004.2px;top:302.8px;width:26px;height:1.8px;background:#5a5a5a"></div><div class="a" style="left:1004.2px;top:288.2px;width:26px;height:14.8px;background:#fff;background-image:conic-gradient(#c8c8c8 25%,transparent 0 50%,#c8c8c8 0 75%,transparent 0);background-size:6.6px 6.6px"></div>
<div class="t" style="left:1038px;top:286.6px;font-size:8.5px;line-height:10px;color:#bdbdbd;width:14px;overflow:hidden">100</div>
<div class="t" style="left:1038px;top:297.6px;font-size:8.5px;line-height:10px;color:#bdbdbd;width:14px;overflow:hidden">图层</div>
<div class="a" style="left:1020px;top:295.2px;width:1.5px;height:1.5px;background:#333"></div>
<div class="a" style="left:997px;top:308.3px;width:56px;height:1.2px;background:#2a2a2a"></div>
<svg style="left:928px;top:317.5px" width="14" height="10" fill="none"><path d="M1 5q6-7 12 0q-6 6-12 0z" fill="#3e3e3e" stroke="#d0d0d0" stroke-width="1.2"/><circle cx="7" cy="5" r="2.6" fill="#d8d8d8"/></svg>
<div class="a" style="left:947px;top:318.0px;width:9px;height:9px;border:1px solid #565656;border-radius:1px"></div>
<div class="a" style="left:1003.5px;top:312.9px;width:27.5px;height:19.5px;background:#222"></div><div class="a" style="left:1004.2px;top:313.9px;width:26px;height:1.8px;background:#5a5a5a"></div><div class="a" style="left:1004.2px;top:330.1px;width:26px;height:1.8px;background:#5a5a5a"></div><div class="a" style="left:1004.2px;top:315.5px;width:26px;height:14.8px;background:#fff;background-image:conic-gradient(#c8c8c8 25%,transparent 0 50%,#c8c8c8 0 75%,transparent 0);background-size:6.6px 6.6px"></div>
<div class="a" style="left:1041px;top:315.0px;width:12px;height:15px;overflow:hidden"><svg style="left:0;top:0" width="15" height="15" fill="none"><rect x="0.5" y="0.5" width="14" height="14" fill="#3e3e3e" stroke="#e8e8e8" stroke-width="1"/><rect x="2" y="2" width="11" height="11" stroke="#e8e8e8" stroke-width="0.8"/><path d="M7.5 3.5l3.5 2v4l-3.5 2-3.5-2v-4zM4 5.5l3.5 2 3.5-2M7.5 7.5v4" stroke="#f0f0f0" stroke-width="0.9"/></svg></div>
<div class="a" style="left:997px;top:335.5px;width:56px;height:1.2px;background:#2a2a2a"></div>
<div class="a" style="left:930.5px;top:345.2px;width:9px;height:9px;border:1px solid #4c4c4c;border-radius:2px"></div>
<div class="a" style="left:947px;top:345.2px;width:9px;height:9px;border:1px solid #565656;border-radius:1px"></div>
<div class="a" style="left:1003.5px;top:340.1px;width:27.5px;height:19.5px;background:#222"></div><div class="a" style="left:1004.2px;top:341.1px;width:26px;height:1.8px;background:#5a5a5a"></div><div class="a" style="left:1004.2px;top:357.3px;width:26px;height:1.8px;background:#5a5a5a"></div><div class="a" style="left:1004.2px;top:342.7px;width:26px;height:14.8px;background:#fff;background-image:conic-gradient(#c8c8c8 25%,transparent 0 50%,#c8c8c8 0 75%,transparent 0);background-size:6.6px 6.6px"></div>
<div class="a" style="left:1041px;top:342.2px;width:12px;height:15px;overflow:hidden"><svg style="left:0;top:0" width="15" height="15" fill="none"><rect x="0.5" y="0.5" width="14" height="14" fill="#3e3e3e" stroke="#e8e8e8" stroke-width="1"/><rect x="2" y="2" width="11" height="11" stroke="#e8e8e8" stroke-width="0.8"/><path d="M7.5 3.5l3.5 2v4l-3.5 2-3.5-2v-4zM4 5.5l3.5 2 3.5-2M7.5 7.5v4" stroke="#f0f0f0" stroke-width="0.9"/></svg></div>
<div class="a" style="left:997px;top:362.7px;width:56px;height:1.2px;background:#2a2a2a"></div>
<svg style="left:928px;top:371.9px" width="14" height="10" fill="none"><path d="M1 5q6-7 12 0q-6 6-12 0z" fill="#3e3e3e" stroke="#d0d0d0" stroke-width="1.2"/><circle cx="7" cy="5" r="2.6" fill="#d8d8d8"/></svg>
<div class="a" style="left:947px;top:372.4px;width:9px;height:9px;border:1px solid #565656;border-radius:1px"></div>
<div class="a" style="left:1003.5px;top:367.3px;width:27.5px;height:19.5px;background:#222"></div><div class="a" style="left:1004.2px;top:368.3px;width:26px;height:1.8px;background:#5a5a5a"></div><div class="a" style="left:1004.2px;top:384.5px;width:26px;height:1.8px;background:#5a5a5a"></div><div class="a" style="left:1004.2px;top:369.9px;width:26px;height:14.8px;background:#fff;background-image:conic-gradient(#c8c8c8 25%,transparent 0 50%,#c8c8c8 0 75%,transparent 0);background-size:6.6px 6.6px"></div>
<div class="a" style="left:1041px;top:369.4px;width:12px;height:15px;overflow:hidden"><svg style="left:0;top:0" width="15" height="15" fill="none"><rect x="0.5" y="0.5" width="14" height="14" fill="#3e3e3e" stroke="#e8e8e8" stroke-width="1"/><rect x="2" y="2" width="11" height="11" stroke="#e8e8e8" stroke-width="0.8"/><path d="M7.5 3.5l3.5 2v4l-3.5 2-3.5-2v-4zM4 5.5l3.5 2 3.5-2M7.5 7.5v4" stroke="#f0f0f0" stroke-width="0.9"/></svg></div>
<div class="a" style="left:997px;top:389.9px;width:56px;height:1.2px;background:#2a2a2a"></div>
<div class="a" style="left:930.5px;top:399.6px;width:9px;height:9px;border:1px solid #4c4c4c;border-radius:2px"></div>
<div class="a" style="left:947px;top:399.6px;width:9px;height:9px;border:1px solid #565656;border-radius:1px"></div>
<div class="a" style="left:1003.5px;top:394.5px;width:27.5px;height:19.5px;background:#222"></div><div class="a" style="left:1004.2px;top:395.5px;width:26px;height:1.8px;background:#5a5a5a"></div><div class="a" style="left:1004.2px;top:411.7px;width:26px;height:1.8px;background:#5a5a5a"></div><div class="a" style="left:1004.2px;top:397.1px;width:26px;height:14.8px;background:#fff;background-image:conic-gradient(#c8c8c8 25%,transparent 0 50%,#c8c8c8 0 75%,transparent 0);background-size:6.6px 6.6px"></div>
<div class="a" style="left:1041px;top:396.6px;width:12px;height:15px;overflow:hidden"><svg style="left:0;top:0" width="15" height="15" fill="none"><rect x="0.5" y="0.5" width="14" height="14" fill="#3e3e3e" stroke="#e8e8e8" stroke-width="1"/><rect x="2" y="2" width="11" height="11" stroke="#e8e8e8" stroke-width="0.8"/><path d="M7.5 3.5l3.5 2v4l-3.5 2-3.5-2v-4zM4 5.5l3.5 2 3.5-2M7.5 7.5v4" stroke="#f0f0f0" stroke-width="0.9"/></svg></div>
<div class="a" style="left:997px;top:417.1px;width:56px;height:1.2px;background:#2a2a2a"></div>
<svg style="left:928px;top:426.4px" width="14" height="10" fill="none"><path d="M1 5q6-7 12 0q-6 6-12 0z" fill="#3e3e3e" stroke="#d0d0d0" stroke-width="1.2"/><circle cx="7" cy="5" r="2.6" fill="#d8d8d8"/></svg>
<div class="a" style="left:947px;top:426.9px;width:9px;height:9px;border:1px solid #565656;border-radius:1px"></div>
<div class="a" style="left:1003.5px;top:421.7px;width:27.5px;height:19.5px;background:#222"></div><div class="a" style="left:1004.2px;top:422.7px;width:26px;height:1.8px;background:#5a5a5a"></div><div class="a" style="left:1004.2px;top:438.9px;width:26px;height:1.8px;background:#5a5a5a"></div><div class="a" style="left:1004.2px;top:424.3px;width:26px;height:14.8px;background:#fff;background-image:conic-gradient(#c8c8c8 25%,transparent 0 50%,#c8c8c8 0 75%,transparent 0);background-size:6.6px 6.6px"></div>
<div class="a" style="left:1041px;top:423.9px;width:12px;height:15px;overflow:hidden"><svg style="left:0;top:0" width="15" height="15" fill="none"><rect x="0.5" y="0.5" width="14" height="14" fill="#3e3e3e" stroke="#e8e8e8" stroke-width="1"/><rect x="2" y="2" width="11" height="11" stroke="#e8e8e8" stroke-width="0.8"/><path d="M7.5 3.5l3.5 2v4l-3.5 2-3.5-2v-4zM4 5.5l3.5 2 3.5-2M7.5 7.5v4" stroke="#f0f0f0" stroke-width="0.9"/></svg></div>
<svg style="left:1005px;top:429.4px" width="24" height="4"><path d="M3 2q8 1.5 16 0" stroke="#444" stroke-width="1" fill="none"/></svg>
<div class="a" style="left:927px;top:444.4px;width:126px;height:1.2px;background:#2a2a2a"></div>
<svg style="left:928px;top:453.6px" width="14" height="10" fill="none"><path d="M1 5q6-7 12 0q-6 6-12 0z" fill="#3e3e3e" stroke="#d0d0d0" stroke-width="1.2"/><circle cx="7" cy="5" r="2.6" fill="#d8d8d8"/></svg>
<div class="a" style="left:947px;top:454.1px;width:9px;height:9px;border:1px solid #565656;border-radius:1px"></div>
<div class="a" style="left:964.2px;top:449.0px;width:27.5px;height:19.5px;background:#222"></div><div class="a" style="left:964.9000000000001px;top:450.0px;width:26px;height:1.8px;background:#5a5a5a"></div><div class="a" style="left:964.9000000000001px;top:466.2px;width:26px;height:1.8px;background:#5a5a5a"></div><div class="a" style="left:964.9000000000001px;top:451.6px;width:26px;height:14.8px;background:#fff;background-image:conic-gradient(#c8c8c8 25%,transparent 0 50%,#c8c8c8 0 75%,transparent 0);background-size:6.6px 6.6px"></div>
<svg style="left:1001.5px;top:451.6px" width="15" height="15" fill="none"><rect x="0.5" y="0.5" width="14" height="14" fill="#3e3e3e" stroke="#e8e8e8" stroke-width="1"/><rect x="2" y="2" width="11" height="11" stroke="#e8e8e8" stroke-width="0.8"/><path d="M7.5 3.5l3.5 2v4l-3.5 2-3.5-2v-4zM4 5.5l3.5 2 3.5-2M7.5 7.5v4" stroke="#f0f0f0" stroke-width="0.9"/></svg>
<div class="t" style="left:1019px;top:448.8px;font-size:9px;line-height:10px;color:#e2e2e2;width:34px;overflow:hidden;">100 % ⁝</div><div class="t" style="left:1019px;top:459.8px;font-size:9px;line-height:10px;color:#e2e2e2;width:34px;overflow:hidden;">图层 8</div>
<div class="a" style="left:927px;top:471.6px;width:126px;height:1.2px;background:#2a2a2a"></div>
<div class="a" style="left:930.5px;top:481.3px;width:9px;height:9px;border:1px solid #4c4c4c;border-radius:2px"></div>
<div class="a" style="left:947px;top:481.3px;width:9px;height:9px;border:1px solid #565656;border-radius:1px"></div>
<div class="a" style="left:964.2px;top:476.2px;width:27.5px;height:19.5px;background:#222"></div><div class="a" style="left:964.9000000000001px;top:477.2px;width:26px;height:1.8px;background:#5a5a5a"></div><div class="a" style="left:964.9000000000001px;top:493.4px;width:26px;height:1.8px;background:#5a5a5a"></div><div class="a" style="left:964.9000000000001px;top:478.8px;width:26px;height:14.8px;background:#fff;background-image:conic-gradient(#c8c8c8 25%,transparent 0 50%,#c8c8c8 0 75%,transparent 0);background-size:6.6px 6.6px"></div>
<svg style="left:965px;top:478.8px" width="26" height="15"><path d="M4 7q3-4 6-1q3-4 6 0q3-3 6 1q-3 3-6 1q-3 3-6 0q-3 2-6 -1z" fill="none" stroke="#4a88d8" stroke-width="1.6"/></svg>
<svg style="left:1001.5px;top:478.3px" width="15" height="15"><rect x="0.5" y="0.5" width="14" height="14" fill="#f0f0f0"/><circle cx="7.5" cy="5" r="3.5" fill="#e89aa0"/><rect x="2" y="8" width="6" height="5.5" fill="#3a7ad8"/><rect x="9" y="9" width="4.5" height="4.5" fill="#fff" stroke="#333" stroke-width="0.8"/></svg>
<div class="t" style="left:1019px;top:476.0px;font-size:9px;line-height:10px;color:#e2e2e2;width:34px;overflow:hidden;">100 % ⁝</div><div class="t" style="left:1019px;top:487.0px;font-size:9px;line-height:10px;color:#e2e2e2;width:34px;overflow:hidden;">图层 3</div>
<div class="a" style="left:927px;top:498.8px;width:126px;height:1.2px;background:#2a2a2a"></div>
<div class="a" style="left:930.5px;top:508.5px;width:9px;height:9px;border:1px solid #4c4c4c;border-radius:2px"></div>
<div class="a" style="left:947px;top:508.5px;width:9px;height:9px;border:1px solid #565656;border-radius:1px"></div>
<div class="a" style="left:964.2px;top:503.4px;width:27.5px;height:19.5px;background:#222"></div><div class="a" style="left:964.9000000000001px;top:504.4px;width:26px;height:1.8px;background:#5a5a5a"></div><div class="a" style="left:964.9000000000001px;top:520.6px;width:26px;height:1.8px;background:#5a5a5a"></div><div class="a" style="left:964.9000000000001px;top:506.0px;width:26px;height:14.8px;background:#fff;background-image:conic-gradient(#c8c8c8 25%,transparent 0 50%,#c8c8c8 0 75%,transparent 0);background-size:6.6px 6.6px"></div>
<svg style="left:965px;top:506.0px" width="26" height="15"><path d="M10 5l1 5M12 5h3v4" stroke="#333" stroke-width="1" fill="none"/></svg>
<div class="t" style="left:998px;top:503.2px;font-size:9px;line-height:10px;color:#e2e2e2;width:55px;overflow:hidden;">100 % 正常</div><div class="t" style="left:998px;top:514.2px;font-size:9px;line-height:10px;color:#e2e2e2;width:55px;overflow:hidden;">图层 2</div>
<div class="a" style="left:927px;top:526.0px;width:126px;height:1.2px;background:#2a2a2a"></div>
<div class="a" style="left:930.5px;top:535.7px;width:9px;height:9px;border:1px solid #4c4c4c;border-radius:2px"></div>
<div class="a" style="left:947px;top:535.7px;width:9px;height:9px;border:1px solid #565656;border-radius:1px"></div>
<div class="a" style="left:964.2px;top:530.6px;width:27.5px;height:19.5px;background:#222"></div><div class="a" style="left:964.9000000000001px;top:531.6px;width:26px;height:1.8px;background:#5a5a5a"></div><div class="a" style="left:964.9000000000001px;top:547.8px;width:26px;height:1.8px;background:#5a5a5a"></div><div class="a" style="left:964.9000000000001px;top:533.2px;width:26px;height:14.8px;background:#fff;background-image:conic-gradient(#c8c8c8 25%,transparent 0 50%,#c8c8c8 0 75%,transparent 0);background-size:6.6px 6.6px"></div>
<svg style="left:965px;top:533.2px" width="26" height="15"><path d="M8 3l1 4M10 3h3v3M4 10q10 3 20 0" stroke="#444" stroke-width="0.9" fill="none"/></svg>
<div class="t" style="left:998px;top:530.4px;font-size:9px;line-height:10px;color:#e2e2e2;width:55px;overflow:hidden;">100 % 正常</div><div class="t" style="left:998px;top:541.4px;font-size:9px;line-height:10px;color:#e2e2e2;width:55px;overflow:hidden;">图层 1</div>
<div class="a" style="left:927px;top:553.2px;width:126px;height:1.2px;background:#2a2a2a"></div>
<div class="a" style="left:930.5px;top:563.0px;width:9px;height:9px;border:1px solid #4c4c4c;border-radius:2px"></div>
<div class="a" style="left:947px;top:563.0px;width:9px;height:9px;border:1px solid #565656;border-radius:1px"></div>
<div class="a" style="left:964.2px;top:557.8px;width:27.5px;height:19.5px;background:#222"></div><div class="a" style="left:964.9000000000001px;top:558.8px;width:26px;height:1.8px;background:#5a5a5a"></div><div class="a" style="left:964.9000000000001px;top:575.0px;width:26px;height:1.8px;background:#5a5a5a"></div><div class="a" style="left:964.9000000000001px;top:560.4px;width:26px;height:14.8px;background:#000"></div>
<div class="t" style="left:998px;top:557.6px;font-size:9px;line-height:10px;color:#e2e2e2;width:55px;overflow:hidden;">100 % 正常</div><div class="t" style="left:998px;top:568.6px;font-size:9px;line-height:10px;color:#e2e2e2;width:55px;overflow:hidden;">图层 6</div>
<div class="a" style="left:927px;top:580.5px;width:126px;height:1.2px;background:#2a2a2a"></div>
<div class="a" style="left:930.5px;top:590.2px;width:9px;height:9px;border:1px solid #4c4c4c;border-radius:2px"></div>
<div class="a" style="left:947px;top:590.2px;width:9px;height:9px;border:1px solid #565656;border-radius:1px"></div>
<div class="a" style="left:964.2px;top:585.1px;width:27.5px;height:19.5px;background:#222"></div><div class="a" style="left:964.9000000000001px;top:586.1px;width:26px;height:1.8px;background:#5a5a5a"></div><div class="a" style="left:964.9000000000001px;top:602.3px;width:26px;height:1.8px;background:#5a5a5a"></div><div class="a" style="left:964.9000000000001px;top:587.7px;width:26px;height:14.8px;background:#fff;background-image:conic-gradient(#c8c8c8 25%,transparent 0 50%,#c8c8c8 0 75%,transparent 0);background-size:6.6px 6.6px"></div>
<svg style="left:965px;top:587.7px" width="26" height="15"><rect width="26" height="15" fill="#fff"/><rect x="17" width="9" height="15" fill="#9a90d0"/><circle cx="21" cy="4" r="2" fill="#c0a8e0"/><circle cx="20" cy="11" r="2.5" fill="#7868b8"/><rect x="2" y="3" width="15" height="6" fill="none" stroke="#e03030" stroke-width="1.3"/><path d="M4 6h11" stroke="#e83030" stroke-width="1.5"/></svg>
<div class="t" style="left:998px;top:584.9px;font-size:9px;line-height:10px;color:#e2e2e2;width:55px;overflow:hidden;">100 % 正常</div><div class="t" style="left:998px;top:595.9px;font-size:9px;line-height:10px;color:#e2e2e2;width:55px;overflow:hidden;">画板 1</div>
<div class="a" style="left:927px;top:607.7px;width:126px;height:1.2px;background:#2a2a2a"></div>
<div class="a" style="left:927px;top:760px;width:136px;height:16px;background:#484848"></div>
<svg style="left:0;top:0" width="1080" height="781" fill="none" stroke="#b8b8b8" stroke-width="1"><path d="M934.5 773v-9.5h9v7"/><circle cx="944" cy="773" r="2.6" fill="#3e3e3e"/><path d="M944 771.5v3M942.5 773h3"/><rect x="950.5" y="763.5" width="9" height="9"/><circle cx="955" cy="768" r="2.5"/><circle cx="960" cy="773" r="2.6" fill="#3e3e3e"/><path d="M958.5 773h3"/><path d="M966 773v-9h4l1.5 1.5h5v5" fill="#a8a8a8"/><circle cx="976" cy="773" r="2.6" fill="#3e3e3e"/><path d="M976 771.5v3M974.5 773h3"/><g stroke="#6a6a6a"><path d="M985 765.5h6v6M982.5 768.5h6v6h-6z"/><path d="M1000 765.5h6v6M997.5 768.5h6v6h-6z"/></g><rect x="1016.5" y="762.5" width="11" height="11" fill="#d8d8d8" stroke="none"/><circle cx="1022" cy="768" r="3.3" fill="#333" stroke="none"/><g stroke="#707070"><rect x="1032.5" y="763.5" width="9" height="9"/><circle cx="1041" cy="769" r="3"/></g><path d="M1048 764.5h9M1049.5 765v9h6v-9M1051.5 767v6M1053.5 767v6" /></svg>
  <div class="a" style="left:1076px;top:20px;width:4px;height:760px;background:#424242;border-left:1px solid #2e2e2e"></div>
  <!-- doc -->
  <div class="a" style="left:223px;top:282px;width:475px;height:268px;box-shadow:0 0 0 1px #242424;background:#fff;background-image:conic-gradient(#cacaca 25%,transparent 0 50%,#cacaca 0 75%,transparent 0);background-size:6.6px 6.6px"></div>
  <svg style="left:0;top:0" width="1080" height="781" viewBox="0 0 1080 781" fill="none" stroke-linecap="round" stroke-linejoin="round">
 <!-- sticker -->
 <path fill="#fff" stroke="#080808" stroke-width="4.6" d="
 M300.6 356 C 300 349, 303 344, 307 341.5 C 310 339.5, 314 339, 318 338
 C 322 331, 331 326.5, 343 325 C 350 324.5, 355 325.5, 359.5 327.5
 C 366 322, 374 321.5, 381 321.5 C 390 322, 396 327, 399.5 333
 C 403 325, 413 319, 428 317.5 C 441 318, 449 325, 452.5 339
 C 462 339, 472 340, 483 347.5
 C 490 341, 500 337, 512 336.5 C 526 337, 536 343, 543 353
 C 549 341, 560 331, 580 328.5 C 593 329, 602 332, 607 338
 C 617 336.5, 626 340, 631 348 C 635 357, 632 367, 621 372.5 L 613 373
 C 620 379, 623 390, 623.5 400 C 623.5 415, 618 425, 607.5 433
 C 603 445, 600 456, 590 463 C 583 468, 575 470, 568 473
 C 558 478, 545 481, 532 483 C 518 485, 505 484, 494 481.5
 C 484 485, 470 485.5, 461 482.5 C 452 480, 444 475, 437.5 471
 C 428 475, 416 475, 405 472.5 C 392 470, 378 466, 368.5 464.5
 C 358 465, 346 467.5, 336 468.5 C 325 467, 316 461, 315.5 452 C 315 444, 318 438, 324.5 435
 C 316 441, 303 440, 297 433 C 292 426, 294 416, 301 411 C 305 408, 309 406, 311.5 404.5
 C 305 400, 302 394, 302.5 386 C 303 380, 305 375, 310.5 371
 C 304 369, 300 364, 300.6 356 Z"/>
 <!-- orange shadows -->
 <g stroke="#f79640" stroke-width="4.6">
  <path d="M329 345 L314 359 M329 354 L330.5 371 M336 363 L352 352 M341 347 L353.5 367"/>
  <path d="M320 387 Q322 392 326 394 M343 377 L346 379 M335 402 Q346 401 355 401 Q353 408 349 415"/>
  <path d="M412 350.5 L429 339 L441 354 L433 356.5" stroke-width="4.6"/>
  <path d="M446 400 Q460 395 458 392 M446 406 Q440 422 444 437 Q452 442 468 430 Q478 414 480 393 M477 418 Q477 432 486 438 Q520 439 557 437 M487 416 L524 420 M507 399 L504 437 M543 427 Q556 426 568 424"/>
  <path d="M368 344 L372 343"/>
 </g>
 <!-- orange characters (light) -->
 <g stroke="#f8923a" stroke-width="6.6">
  <path d="M362.5 353 L365.5 369"/>
  <path d="M367 391 Q363 377 372 367 Q388 358 410 358 Q428 359 433 368 Q436 377 427 385"/>
  <path d="M447.8 359.4 L474.4 360.6 M464.4 362.2 Q461 375 456 386"/>
  <ellipse cx="510" cy="374.4" rx="20" ry="19.5"/>
  <path d="M493.3 373.3 L526.7 371.1 M510 357.8 L504.4 395.6"/>
  <path d="M616.5 355 L599 357 Q598 346 582 343 Q565 345 559 362 Q562 374 572 374 Q590 370 599 357"/>
  <path d="M560 358 Q553 375 546 392 Q540 408 542 423"/>
  <path d="M553 381.7 Q572 379 587 380 Q603 384 606.5 398 Q606 413 598 419 Q589 423 587 414"/>
  <path d="M376 351.5 L379 353" stroke-width="4"/>
 </g>
 <!-- B and swoosh (darker orange) -->
 <g stroke="#f47a32" stroke-width="8">
  <path d="M384 378 L388.5 415"/>
  <path d="M382.5 378 Q403 375.5 414 380.5 Q422 389 411 396.5 Q399 398 389 398 Q413 397.5 421 402.5 Q425 412 409 415.5 Q397 417 388.5 415"/>
 </g>
 <path stroke="#f47a32" stroke-width="6" d="M308.5 427 Q322 417.5 345 415.5 Q380 414 414 418 Q428 418 437 413"/>
 <path stroke="#f47a32" stroke-width="5.5" d="M478 441 Q520 442 540 437 Q556 433 562 429"/>
 <!-- black strokes -->
 <g stroke="#080808" stroke-width="4.8">
  <path d="M331.5 342.7 L316.5 357.1 M326.3 353 L327.5 369.2 M333 361.5 L349.5 350 M338.4 345.5 L351 364.6 M349 344 L352 345.5"/>
  <path d="M331 376 h10 v9.5 h-10 z" stroke-width="4.6"/>
  <path d="M324 390 Q334 393 353.4 386.5 M332.6 400.3 Q343 399 352.2 398 Q349 405 345.3 413"/>
 </g>
 <rect x="365.5" y="338.5" width="20.5" height="19" rx="7.5" stroke="#080808" stroke-width="6"/>
 <path stroke="#080808" stroke-width="5" d="M409 348 Q413 346.5 413 345.5 L426.5 335.5 L438.3 350.7 L431 353.3"/>
 <circle cx="423.6" cy="348.8" r="2.6" fill="#080808"/>
 <g stroke="#080808" stroke-width="6.9">
  <path d="M426.1 399.7 Q440 396 453.8 388.4 Q446 397 441 412 Q438 428 442 433 Q450 438 458 432 Q468 420 472.5 404 L476.4 388.4 Q470 405 473 424 Q476 434 484 435 Q520 436 557 435.5 Q566 432 573 426 L590 400"/>
  <path d="M504 395.6 L500.9 433.5 M483.5 411 Q500 418 523 417"/>
  <path d="M590 400 Q585 392 574 394 Q559 399 556.5 409 Q557 418 566 416 Q580 412 590 400"/>
 </g>
 <!-- red Bureau -->
 <g stroke="#d84a47" stroke-width="6.2">
  <path d="M356 427 L333.5 453"/>
  <path d="M353.5 427.6 Q365 424 370 426 Q374 431 369 436 Q362 440 348 440.5 Q366 440 374 443 Q376 449 366 451 Q350 454 334 453.5"/>
  <path d="M339.3 441.8 Q348 440 358.7 440"/>
  <path d="M378.1 448.3 Q386 441 393.7 437.9 Q386 447 386 450 Q390 453 398 450 Q406 445 413.2 440.5 Q408 448 410 451 Q414 452 418.3 450.9"/>
  <path d="M420.4 459.8 Q428 449 436 444 Q446 445 452 450"/>
  <path d="M452 451 Q470 456 487 448 Q490 439 477 439.5 Q459 443 456 457 Q457 469 472 468 Q488 466 499 461"/>
  <path d="M523 448 Q508 443 499 452 Q493 464 503 467 Q516 465 524 448 Q519 459 522 464 Q525 467 527 466"/>
  <path d="M526.7 466 Q540 454 554 443.5 Q546 458 549 461.5 Q556 463 575 435.4 Q567 450 570 454.5 Q576 457 590.7 433"/>
 </g>
 <!-- arrow -->
 <path fill="#ff1414" stroke="#ff1414" stroke-width="2.5" d="M597 437 L619 449.5 L612.5 453 L621.5 462.5 L617.5 467.5 L608 458 L601.5 463 Z"/>
</svg>

</div>
</body></html>
